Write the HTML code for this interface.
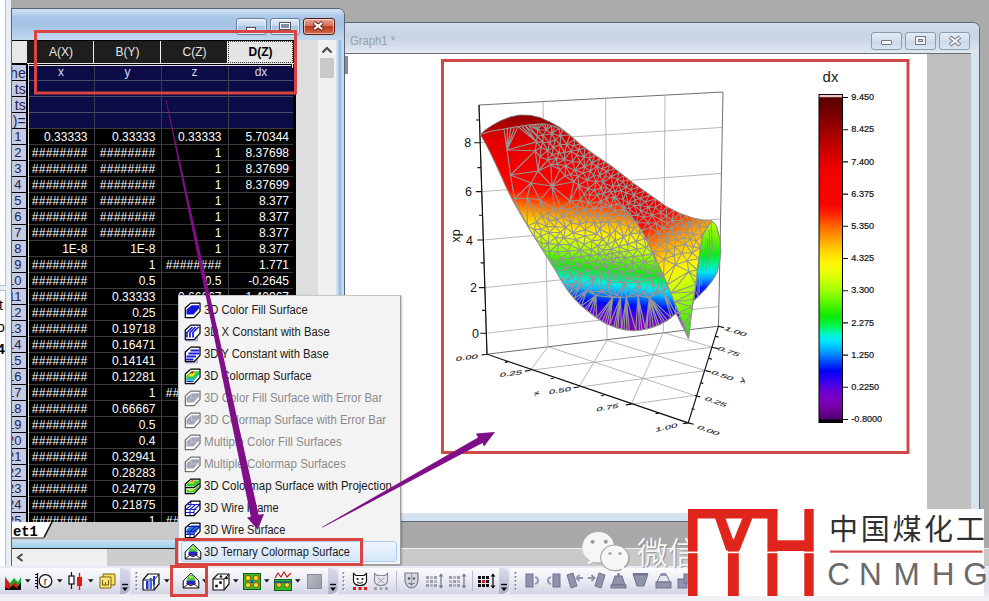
<!DOCTYPE html>
<html><head><meta charset="utf-8"><title>Origin 3D Ternary Colormap Surface</title>
<style>
html,body{margin:0;padding:0;}
body{width:989px;height:601px;overflow:hidden;background:#ababab;font-family:"Liberation Sans",sans-serif;}
#root{position:relative;width:989px;height:601px;overflow:hidden;background:#ababab;}
.a{position:absolute;}
.cell{position:absolute;height:16px;line-height:17px;font-size:12px;color:#fff;text-align:right;white-space:nowrap;overflow:hidden;}
.rh{position:absolute;left:11.5px;width:14.7px;height:15px;background:#c5cbe3;color:#1c2252;font-size:13px;line-height:16px;overflow:hidden;white-space:nowrap;display:flex;justify-content:flex-end;padding-right:4.7px;box-sizing:border-box;}
.rh.r{padding-right:0.5px;}
.mi{position:absolute;left:204px;font-size:11.5px;color:#1a1a1a;white-space:nowrap;line-height:14px;letter-spacing:0.1px;}
.mi.dis{color:#8a8a8a;}
.tk{font-family:"Liberation Sans",sans-serif;}
</style></head>
<body><div id="root">
<div class="a" style="left:0;top:0;width:6px;height:567px;background:#fff;border-right:1px solid #b8bcc4;border-bottom:1px solid #b8bcc4;box-sizing:border-box"></div>
<div class="a" style="left:6px;top:0;width:5px;height:567px;background:#e9edf4"></div>
<div class="a" style="left:0;top:285px;width:6px;height:1px;background:#b8bcc4"></div><div class="a" style="left:0;top:286px;width:6px;height:4px;background:#e9edf4"></div><div class="a" style="left:0;top:290px;width:6px;height:1px;background:#b8bcc4"></div>
<div class="a" style="left:0;top:294px;width:5px;height:60px;font-size:14px;line-height:22px;color:#000;overflow:hidden;white-space:nowrap"><div style="margin-left:-1px">t</div><div style="margin-left:-3px">p</div><div style="margin-left:-3px;font-weight:bold">4</div></div>
<div class="a" style="left:11px;top:8px;width:334px;height:560px;background:#b9d1ea;border:1px solid #5a6470;border-radius:0 7px 0 0;box-sizing:border-box"></div>
<div class="a" style="left:12px;top:9px;width:332px;height:31px;border-radius:0 6px 0 0;background:linear-gradient(#d2e2f4 0,#a8c5e7 28%,#a6c4e6 55%,#c4d8ef 100%)"></div>
<div class="a" style="left:336px;top:40px;width:8px;height:526px;background:linear-gradient(90deg,#d9e6f4 0,#b5d0ec 32%,#86b4e2 50%,#b5d0ec 66%,#cfdff1 100%)"></div>
<div class="a" style="left:12px;top:40px;width:324px;height:482px;background:#000"></div>
<div class="a" style="left:12px;top:41px;width:15px;height:22px;background:#e8e8e8"></div>
<div class="a" style="left:27px;top:41px;width:269px;height:22px;background:#1e1e1e"></div>
<div class="a" style="left:29px;top:41px;width:64px;height:22px;line-height:23px;text-align:center;font-size:12px;color:#e6e6e6">A(X)</div>
<div class="a" style="left:93px;top:41px;width:1px;height:22px;background:#f0f0f0"></div>
<div class="a" style="left:95px;top:41px;width:65px;height:22px;line-height:23px;text-align:center;font-size:12px;color:#e6e6e6">B(Y)</div>
<div class="a" style="left:160px;top:41px;width:1px;height:22px;background:#f0f0f0"></div>
<div class="a" style="left:162px;top:41px;width:65px;height:22px;line-height:23px;text-align:center;font-size:12px;color:#e6e6e6">C(Z)</div>
<div class="a" style="left:227px;top:41px;width:1px;height:22px;background:#f0f0f0"></div>
<div class="a" style="left:228px;top:41px;width:65px;height:22px;line-height:21px;text-align:center;font-size:12px;font-weight:bold;color:#000;background:#e4e4e4;border:1px dotted #333;box-sizing:border-box">D(Z)</div>
<div class="a" style="left:27px;top:63px;width:269px;height:1px;background:#e8e8e8"></div>
<div class="a" style="left:28px;top:65px;width:266px;height:63px;background:#0b0b45;border:1px solid #e0e0e0;border-bottom:none;box-sizing:border-box"></div>
<div class="a" style="left:29px;top:80px;width:264px;height:1px;background:#4a4a6a"></div>
<div class="a" style="left:29px;top:96px;width:264px;height:1px;background:#4a4a6a"></div>
<div class="a" style="left:29px;top:112px;width:264px;height:1px;background:#4a4a6a"></div>
<div class="a" style="left:94px;top:66px;width:1px;height:456px;background:#3c3c4c"></div>
<div class="a" style="left:161px;top:66px;width:1px;height:456px;background:#3c3c4c"></div>
<div class="a" style="left:228px;top:66px;width:1px;height:456px;background:#3c3c4c"></div>
<div class="cell" style="left:29px;top:65px;width:64px;text-align:center;color:#d8d8f0;line-height:15px">x</div>
<div class="cell" style="left:95px;top:65px;width:65px;text-align:center;color:#d8d8f0;line-height:15px">y</div>
<div class="cell" style="left:162px;top:65px;width:65px;text-align:center;color:#d8d8f0;line-height:15px">z</div>
<div class="cell" style="left:229px;top:65px;width:64px;text-align:center;color:#d8d8f0;line-height:15px">dx</div>
<div class="rh r" style="top:65px;font-size:14px;line-height:16px"><span>he</span></div>
<div class="rh r" style="top:81px;font-size:14px;line-height:16px"><span>ts</span></div>
<div class="rh r" style="top:97px;font-size:14px;line-height:16px"><span>ts</span></div>
<div class="rh r" style="top:113px;font-size:14px;line-height:16px"><span>)=</span></div>
<div class="a" style="left:29px;top:128px;width:264px;height:1px;background:#3a3a3a"></div>
<div class="rh" style="top:129px;height:15px"><span>1</span></div>
<div class="cell" style="left:29px;top:129px;width:58.5px">0.33333</div>
<div class="cell" style="left:95px;top:129px;width:60.5px">0.33333</div>
<div class="cell" style="left:162px;top:129px;width:59.5px">0.33333</div>
<div class="cell" style="left:229px;top:129px;width:60.0px">5.70344</div>
<div class="a" style="left:29px;top:144px;width:264px;height:1px;background:#3a3a3a"></div>
<div class="rh" style="top:145px;height:15px"><span>2</span></div>
<div class="cell" style="left:29px;top:145px;width:58.5px;letter-spacing:0.3px">########</div>
<div class="cell" style="left:95px;top:145px;width:60.5px;letter-spacing:0.3px">########</div>
<div class="cell" style="left:162px;top:145px;width:59.5px">1</div>
<div class="cell" style="left:229px;top:145px;width:60.0px">8.37698</div>
<div class="a" style="left:29px;top:160px;width:264px;height:1px;background:#3a3a3a"></div>
<div class="rh" style="top:161px;height:15px"><span>3</span></div>
<div class="cell" style="left:29px;top:161px;width:58.5px;letter-spacing:0.3px">########</div>
<div class="cell" style="left:95px;top:161px;width:60.5px;letter-spacing:0.3px">########</div>
<div class="cell" style="left:162px;top:161px;width:59.5px">1</div>
<div class="cell" style="left:229px;top:161px;width:60.0px">8.37699</div>
<div class="a" style="left:29px;top:176px;width:264px;height:1px;background:#3a3a3a"></div>
<div class="rh" style="top:177px;height:15px"><span>4</span></div>
<div class="cell" style="left:29px;top:177px;width:58.5px;letter-spacing:0.3px">########</div>
<div class="cell" style="left:95px;top:177px;width:60.5px;letter-spacing:0.3px">########</div>
<div class="cell" style="left:162px;top:177px;width:59.5px">1</div>
<div class="cell" style="left:229px;top:177px;width:60.0px">8.37699</div>
<div class="a" style="left:29px;top:192px;width:264px;height:1px;background:#3a3a3a"></div>
<div class="rh" style="top:193px;height:15px"><span>5</span></div>
<div class="cell" style="left:29px;top:193px;width:58.5px;letter-spacing:0.3px">########</div>
<div class="cell" style="left:95px;top:193px;width:60.5px;letter-spacing:0.3px">########</div>
<div class="cell" style="left:162px;top:193px;width:59.5px">1</div>
<div class="cell" style="left:229px;top:193px;width:60.0px">8.377</div>
<div class="a" style="left:29px;top:208px;width:264px;height:1px;background:#3a3a3a"></div>
<div class="rh" style="top:209px;height:15px"><span>6</span></div>
<div class="cell" style="left:29px;top:209px;width:58.5px;letter-spacing:0.3px">########</div>
<div class="cell" style="left:95px;top:209px;width:60.5px;letter-spacing:0.3px">########</div>
<div class="cell" style="left:162px;top:209px;width:59.5px">1</div>
<div class="cell" style="left:229px;top:209px;width:60.0px">8.377</div>
<div class="a" style="left:29px;top:224px;width:264px;height:1px;background:#3a3a3a"></div>
<div class="rh" style="top:225px;height:15px"><span>7</span></div>
<div class="cell" style="left:29px;top:225px;width:58.5px;letter-spacing:0.3px">########</div>
<div class="cell" style="left:95px;top:225px;width:60.5px;letter-spacing:0.3px">########</div>
<div class="cell" style="left:162px;top:225px;width:59.5px">1</div>
<div class="cell" style="left:229px;top:225px;width:60.0px">8.377</div>
<div class="a" style="left:29px;top:240px;width:264px;height:1px;background:#3a3a3a"></div>
<div class="rh" style="top:241px;height:15px"><span>8</span></div>
<div class="cell" style="left:29px;top:241px;width:58.5px">1E-8</div>
<div class="cell" style="left:95px;top:241px;width:60.5px">1E-8</div>
<div class="cell" style="left:162px;top:241px;width:59.5px">1</div>
<div class="cell" style="left:229px;top:241px;width:60.0px">8.377</div>
<div class="a" style="left:29px;top:256px;width:264px;height:1px;background:#3a3a3a"></div>
<div class="rh" style="top:257px;height:15px"><span>9</span></div>
<div class="cell" style="left:29px;top:257px;width:58.5px;letter-spacing:0.3px">########</div>
<div class="cell" style="left:95px;top:257px;width:60.5px">1</div>
<div class="cell" style="left:162px;top:257px;width:59.5px;letter-spacing:0.3px">########</div>
<div class="cell" style="left:229px;top:257px;width:60.0px">1.771</div>
<div class="a" style="left:29px;top:272px;width:264px;height:1px;background:#3a3a3a"></div>
<div class="rh" style="top:273px;height:15px"><span>10</span></div>
<div class="cell" style="left:29px;top:273px;width:58.5px;letter-spacing:0.3px">########</div>
<div class="cell" style="left:95px;top:273px;width:60.5px">0.5</div>
<div class="cell" style="left:162px;top:273px;width:59.5px">0.5</div>
<div class="cell" style="left:229px;top:273px;width:60.0px">-0.2645</div>
<div class="a" style="left:29px;top:288px;width:264px;height:1px;background:#3a3a3a"></div>
<div class="rh" style="top:289px;height:15px"><span>11</span></div>
<div class="cell" style="left:29px;top:289px;width:58.5px;letter-spacing:0.3px">########</div>
<div class="cell" style="left:95px;top:289px;width:60.5px">0.33333</div>
<div class="cell" style="left:162px;top:289px;width:59.5px">0.66667</div>
<div class="cell" style="left:229px;top:289px;width:60.0px">1.40967</div>
<div class="a" style="left:29px;top:304px;width:264px;height:1px;background:#3a3a3a"></div>
<div class="rh" style="top:305px;height:15px"><span>12</span></div>
<div class="cell" style="left:29px;top:305px;width:58.5px;letter-spacing:0.3px">########</div>
<div class="cell" style="left:95px;top:305px;width:60.5px">0.25</div>
<div class="cell" style="left:162px;top:305px;width:59.5px">0.75</div>
<div class="cell" style="left:229px;top:305px;width:60.0px">2.52465</div>
<div class="a" style="left:29px;top:320px;width:264px;height:1px;background:#3a3a3a"></div>
<div class="rh" style="top:321px;height:15px"><span>13</span></div>
<div class="cell" style="left:29px;top:321px;width:58.5px;letter-spacing:0.3px">########</div>
<div class="cell" style="left:95px;top:321px;width:60.5px">0.19718</div>
<div class="cell" style="left:162px;top:321px;width:59.5px">0.80282</div>
<div class="cell" style="left:229px;top:321px;width:60.0px">3.36141</div>
<div class="a" style="left:29px;top:336px;width:264px;height:1px;background:#3a3a3a"></div>
<div class="rh" style="top:337px;height:15px"><span>14</span></div>
<div class="cell" style="left:29px;top:337px;width:58.5px;letter-spacing:0.3px">########</div>
<div class="cell" style="left:95px;top:337px;width:60.5px">0.16471</div>
<div class="cell" style="left:162px;top:337px;width:59.5px">0.83529</div>
<div class="cell" style="left:229px;top:337px;width:60.0px">3.97645</div>
<div class="a" style="left:29px;top:352px;width:264px;height:1px;background:#3a3a3a"></div>
<div class="rh" style="top:353px;height:15px"><span>15</span></div>
<div class="cell" style="left:29px;top:353px;width:58.5px;letter-spacing:0.3px">########</div>
<div class="cell" style="left:95px;top:353px;width:60.5px">0.14141</div>
<div class="cell" style="left:162px;top:353px;width:59.5px">0.85859</div>
<div class="cell" style="left:229px;top:353px;width:60.0px">4.44372</div>
<div class="a" style="left:29px;top:368px;width:264px;height:1px;background:#3a3a3a"></div>
<div class="rh" style="top:369px;height:15px"><span>16</span></div>
<div class="cell" style="left:29px;top:369px;width:58.5px;letter-spacing:0.3px">########</div>
<div class="cell" style="left:95px;top:369px;width:60.5px">0.12281</div>
<div class="cell" style="left:162px;top:369px;width:59.5px">0.87719</div>
<div class="cell" style="left:229px;top:369px;width:60.0px">4.82874</div>
<div class="a" style="left:29px;top:384px;width:264px;height:1px;background:#3a3a3a"></div>
<div class="rh" style="top:385px;height:15px"><span>17</span></div>
<div class="cell" style="left:29px;top:385px;width:58.5px;letter-spacing:0.3px">########</div>
<div class="cell" style="left:95px;top:385px;width:60.5px">1</div>
<div class="cell" style="left:162px;top:385px;width:59.5px;letter-spacing:0.3px">########</div>
<div class="cell" style="left:229px;top:385px;width:60.0px">1.771</div>
<div class="a" style="left:29px;top:400px;width:264px;height:1px;background:#3a3a3a"></div>
<div class="rh" style="top:401px;height:15px"><span>18</span></div>
<div class="cell" style="left:29px;top:401px;width:58.5px;letter-spacing:0.3px">########</div>
<div class="cell" style="left:95px;top:401px;width:60.5px">0.66667</div>
<div class="cell" style="left:162px;top:401px;width:59.5px">0.33333</div>
<div class="cell" style="left:229px;top:401px;width:60.0px">-0.6331</div>
<div class="a" style="left:29px;top:416px;width:264px;height:1px;background:#3a3a3a"></div>
<div class="rh" style="top:417px;height:15px"><span>19</span></div>
<div class="cell" style="left:29px;top:417px;width:58.5px;letter-spacing:0.3px">########</div>
<div class="cell" style="left:95px;top:417px;width:60.5px">0.5</div>
<div class="cell" style="left:162px;top:417px;width:59.5px">0.5</div>
<div class="cell" style="left:229px;top:417px;width:60.0px">-0.2645</div>
<div class="a" style="left:29px;top:432px;width:264px;height:1px;background:#3a3a3a"></div>
<div class="rh" style="top:433px;height:15px"><span>20</span></div>
<div class="cell" style="left:29px;top:433px;width:58.5px;letter-spacing:0.3px">########</div>
<div class="cell" style="left:95px;top:433px;width:60.5px">0.4</div>
<div class="cell" style="left:162px;top:433px;width:59.5px">0.6</div>
<div class="cell" style="left:229px;top:433px;width:60.0px">0.4133</div>
<div class="a" style="left:29px;top:448px;width:264px;height:1px;background:#3a3a3a"></div>
<div class="rh" style="top:449px;height:15px"><span>21</span></div>
<div class="cell" style="left:29px;top:449px;width:58.5px;letter-spacing:0.3px">########</div>
<div class="cell" style="left:95px;top:449px;width:60.5px">0.32941</div>
<div class="cell" style="left:162px;top:449px;width:59.5px">0.67059</div>
<div class="cell" style="left:229px;top:449px;width:60.0px">0.9684</div>
<div class="a" style="left:29px;top:464px;width:264px;height:1px;background:#3a3a3a"></div>
<div class="rh" style="top:465px;height:15px"><span>22</span></div>
<div class="cell" style="left:29px;top:465px;width:58.5px;letter-spacing:0.3px">########</div>
<div class="cell" style="left:95px;top:465px;width:60.5px">0.28283</div>
<div class="cell" style="left:162px;top:465px;width:59.5px">0.71717</div>
<div class="cell" style="left:229px;top:465px;width:60.0px">1.4227</div>
<div class="a" style="left:29px;top:480px;width:264px;height:1px;background:#3a3a3a"></div>
<div class="rh" style="top:481px;height:15px"><span>23</span></div>
<div class="cell" style="left:29px;top:481px;width:58.5px;letter-spacing:0.3px">########</div>
<div class="cell" style="left:95px;top:481px;width:60.5px">0.24779</div>
<div class="cell" style="left:162px;top:481px;width:59.5px">0.75221</div>
<div class="cell" style="left:229px;top:481px;width:60.0px">1.7968</div>
<div class="a" style="left:29px;top:496px;width:264px;height:1px;background:#3a3a3a"></div>
<div class="rh" style="top:497px;height:15px"><span>24</span></div>
<div class="cell" style="left:29px;top:497px;width:58.5px;letter-spacing:0.3px">########</div>
<div class="cell" style="left:95px;top:497px;width:60.5px">0.21875</div>
<div class="cell" style="left:162px;top:497px;width:59.5px">0.78125</div>
<div class="cell" style="left:229px;top:497px;width:60.0px">2.1253</div>
<div class="a" style="left:29px;top:512px;width:264px;height:1px;background:#3a3a3a"></div>
<div class="rh" style="top:513px;height:10px"><span>25</span></div>
<div class="cell" style="left:29px;top:513px;width:58.5px;letter-spacing:0.3px">########</div>
<div class="cell" style="left:95px;top:513px;width:60.5px">1</div>
<div class="cell" style="left:162px;top:513px;width:59.5px;letter-spacing:0.3px">########</div>
<div class="cell" style="left:229px;top:513px;width:60.0px">1.771</div>
<div class="a" style="left:28px;top:64px;width:1px;height:458px;background:#d8d8d8"></div>
<div class="a" style="left:291px;top:64px;width:3px;height:4px;background:#fff;border:1px solid #000;border-top:none"></div>
<div class="a" style="left:12px;top:522px;width:324px;height:18px;background:#c9c9c9"></div>
<svg class="a" style="left:12px;top:522px" width="60" height="19" viewBox="0 0 60 19"><path d="M0 0H40L32 15.500H0Z" fill="#fff"/><path d="M40 0L32 15.500" stroke="#111" stroke-width="1.600" fill="none"/><path d="M0 16H32" stroke="#555" stroke-width="1"/></svg>
<div class="a" style="left:13px;top:524.5px;font-family:'Liberation Mono',monospace;font-weight:bold;font-size:13.8px;line-height:15px;color:#000;letter-spacing:0">et1</div>
<div class="a" style="left:12px;top:540px;width:324px;height:8px;background:linear-gradient(#c6e2f1,#a2d0e8)"></div>
<div class="a" style="left:12px;top:548px;width:324px;height:1px;background:#222"></div>
<div class="a" style="left:12px;top:549px;width:324px;height:17px;background:#f0f0f0"></div>
<div class="a" style="left:107px;top:549px;width:229px;height:17px;background:#cdcdcd"></div>
<svg class="a" style="left:15px;top:552px" width="12" height="11" viewBox="0 0 12 11"><path d="M7.500 2L3 5.500L7.500 9" stroke="#505050" stroke-width="2.200" fill="none"/></svg>
<div class="a" style="left:296px;top:40px;width:22px;height:482px;background:#dedede"></div>
<div class="a" style="left:293px;top:64px;width:3px;height:458px;background:#000"></div>
<div class="a" style="left:318px;top:40px;width:18px;height:482px;background:#f0f0f0"></div>
<div class="a" style="left:320px;top:58px;width:14px;height:20px;background:#c9c9c9"></div>
<svg class="a" style="left:320px;top:44px" width="14" height="12" viewBox="0 0 14 12"><path d="M2.5 8.5L7 4L11.5 8.5" stroke="#444" stroke-width="2" fill="none"/></svg>
<div class="a" style="left:235.5px;top:18px;width:31px;height:17px;background:linear-gradient(#e4eefa 0,#c4d7ee 45%,#a9c3e2 50%,#c2d6ee 100%);border:1px solid #6a7f99;border-radius:3px;box-sizing:border-box;box-shadow:inset 0 0 0 1px rgba(255,255,255,.55)"></div>
<div class="a" style="left:269.5px;top:18px;width:30.5px;height:17px;background:linear-gradient(#e4eefa 0,#c4d7ee 45%,#a9c3e2 50%,#c2d6ee 100%);border:1px solid #6a7f99;border-radius:3px;box-sizing:border-box;box-shadow:inset 0 0 0 1px rgba(255,255,255,.55)"></div>
<div class="a" style="left:303.2px;top:18px;width:31.8px;height:17px;background:linear-gradient(#e9a99b 0,#d5705b 45%,#c1391f 50%,#cf6a4a 100%);border:1px solid #5a1a10;border-radius:3px;box-sizing:border-box;box-shadow:inset 0 0 0 1px rgba(255,255,255,.55)"></div>
<div class="a" style="left:246px;top:27px;width:10px;height:4px;background:#fff;border:1px solid #555;box-sizing:border-box"></div>
<div class="a" style="left:280px;top:23px;width:9.5px;height:6px;border:1.6px solid #fff;outline:1px solid #555;box-sizing:border-box;background:#7d8fa8"></div>
<svg class="a" style="left:312.3px;top:21.3px" width="12.4" height="10" viewBox="0 0 14 11"><path d="M2 1.5L12 9.5M12 1.5L2 9.5" stroke="#4a1a10" stroke-width="4.2"/><path d="M2.5 2L11.5 9M11.5 2L2.5 9" stroke="#fff" stroke-width="2.4"/></svg>
<div class="a" style="left:345px;top:22px;width:635px;height:500px;background:#d6e3f1;border:1px solid #5f6670;border-left:none;border-radius:0 7px 0 0;box-sizing:border-box"></div>
<div class="a" style="left:345px;top:23px;width:634px;height:30px;border-radius:0 6px 0 0;background:linear-gradient(#d6e0ec 0,#c6d3e3 40%,#ccd8e6 60%,#e1e9f2 100%)"></div>
<div class="a" style="left:345px;top:53px;width:626px;height:1px;background:#6a6f76"></div>
<div class="a" style="left:345px;top:54px;width:582px;height:459px;background:#fff"></div>
<div class="a" style="left:927px;top:54px;width:44px;height:459px;background:#c0c0c0"></div>
<div class="a" style="left:345px;top:56px;width:3px;height:18px;background:#8a8a8a"></div>
<div class="a" style="left:350px;top:34px;font-size:12px;line-height:15px;color:#98a0aa;transform:scaleX(0.94);transform-origin:0 0">Graph1 *</div>
<div class="a" style="left:871px;top:32px;width:31px;height:18px;background:linear-gradient(#e3ebf5,#d3dfee 50%,#cad8ea 52%,#d9e4f1);border:1px solid #8b9bb0;border-radius:3px;box-sizing:border-box"></div>
<div class="a" style="left:905px;top:32px;width:31px;height:18px;background:linear-gradient(#e3ebf5,#d3dfee 50%,#cad8ea 52%,#d9e4f1);border:1px solid #8b9bb0;border-radius:3px;box-sizing:border-box"></div>
<div class="a" style="left:939px;top:32px;width:31px;height:18px;background:linear-gradient(#e3ebf5,#d3dfee 50%,#cad8ea 52%,#d9e4f1);border:1px solid #8b9bb0;border-radius:3px;box-sizing:border-box"></div>
<div class="a" style="left:881px;top:40px;width:11px;height:5px;background:#f4f6f9;border:1px solid #707884;border-radius:1px;box-sizing:border-box"></div>
<div class="a" style="left:915px;top:36px;width:11px;height:9px;background:#f4f6f9;border:1px solid #707884;box-sizing:border-box"></div><div class="a" style="left:918px;top:39px;width:5px;height:3px;border:1px solid #707884;box-sizing:border-box;background:#cfd9e6"></div>
<svg class="a" style="left:948px;top:35px" width="14" height="12" viewBox="0 0 14 12"><path d="M2 2L12 10M12 2L2 10" stroke="#707884" stroke-width="4"/><path d="M2.5 2.5L11.5 9.5M11.5 2.5L2.5 9.5" stroke="#f4f6f9" stroke-width="2"/></svg>
<div class="a" style="left:345px;top:522px;width:644px;height:27px;background:#a9a9a9"></div>
<div class="a" style="left:336px;top:548px;width:653px;height:1px;background:#f2f2f2"></div>
<div class="a" style="left:336px;top:549px;width:653px;height:17px;background:#c9c9c9"></div>
<div class="a" style="left:0;top:566px;width:989px;height:31px;background:linear-gradient(#f4f5fa 0,#e4e6f0 50%,#c9ccdd 100%)"></div>
<div class="a" style="left:0;top:597px;width:989px;height:4px;background:#f0f0f4"></div>
<svg class="a" style="left:0;top:0" width="989" height="601" viewBox="0 0 989 601" font-family="'Liberation Sans',sans-serif">
<defs>
<linearGradient id="cb" gradientUnits="userSpaceOnUse" x1="0" y1="97" x2="0.0" y2="419.0"><stop offset="0.0000" stop-color="#560000"/><stop offset="0.0559" stop-color="#7c0000"/><stop offset="0.1180" stop-color="#a80000"/><stop offset="0.1801" stop-color="#d60000"/><stop offset="0.2329" stop-color="#f80000"/><stop offset="0.3354" stop-color="#ff0000"/><stop offset="0.3665" stop-color="#ff2a00"/><stop offset="0.4006" stop-color="#ff6400"/><stop offset="0.4441" stop-color="#ffa200"/><stop offset="0.4814" stop-color="#ffd800"/><stop offset="0.5124" stop-color="#fff600"/><stop offset="0.5497" stop-color="#e4ff00"/><stop offset="0.5994" stop-color="#a4ff00"/><stop offset="0.6460" stop-color="#4cf400"/><stop offset="0.6801" stop-color="#0ce800"/><stop offset="0.7112" stop-color="#00f650"/><stop offset="0.7360" stop-color="#00f8c8"/><stop offset="0.7578" stop-color="#00e8ff"/><stop offset="0.7919" stop-color="#009cff"/><stop offset="0.8261" stop-color="#0040ff"/><stop offset="0.8509" stop-color="#0000ff"/><stop offset="0.8789" stop-color="#3000f0"/><stop offset="0.9099" stop-color="#6400d8"/><stop offset="0.9410" stop-color="#8000c0"/><stop offset="0.9720" stop-color="#70009c"/><stop offset="1.0000" stop-color="#500070"/></linearGradient>
<linearGradient id="gb2" gradientUnits="userSpaceOnUse" x1="582" y1="114" x2="560.4" y2="329.8"><stop offset="0.0000" stop-color="#7a0000"/><stop offset="0.0459" stop-color="#a80000"/><stop offset="0.0826" stop-color="#c80000"/><stop offset="0.1651" stop-color="#e20000"/><stop offset="0.2798" stop-color="#f40000"/><stop offset="0.3761" stop-color="#ff0a00"/><stop offset="0.4220" stop-color="#ff4a00"/><stop offset="0.4587" stop-color="#ff8800"/><stop offset="0.5046" stop-color="#ffc800"/><stop offset="0.5413" stop-color="#fff000"/><stop offset="0.5780" stop-color="#e0ff00"/><stop offset="0.6239" stop-color="#a0ff00"/><stop offset="0.6697" stop-color="#48f000"/><stop offset="0.7064" stop-color="#10e810"/><stop offset="0.7385" stop-color="#00f080"/><stop offset="0.7661" stop-color="#00f0e8"/><stop offset="0.7936" stop-color="#00c0ff"/><stop offset="0.8303" stop-color="#0050ff"/><stop offset="0.8578" stop-color="#0008ff"/><stop offset="0.8899" stop-color="#4000e8"/><stop offset="0.9266" stop-color="#7800cc"/><stop offset="0.9725" stop-color="#8800b0"/><stop offset="1.0000" stop-color="#700090"/></linearGradient>
<linearGradient id="gf2" gradientUnits="userSpaceOnUse" x1="643.825" y1="182.65" x2="714.9" y2="324.8"><stop offset="0.0000" stop-color="#e80000"/><stop offset="0.1572" stop-color="#f00000"/><stop offset="0.2516" stop-color="#ff1000"/><stop offset="0.3270" stop-color="#ff5800"/><stop offset="0.3962" stop-color="#ff9800"/><stop offset="0.4843" stop-color="#ffd000"/><stop offset="0.5723" stop-color="#fff400"/><stop offset="0.6604" stop-color="#d8ff00"/><stop offset="0.7673" stop-color="#98ff00"/><stop offset="0.8805" stop-color="#50f000"/><stop offset="1.0000" stop-color="#18e800"/></linearGradient>
<linearGradient id="gr2" gradientUnits="userSpaceOnUse" x1="0" y1="224" x2="0.0" y2="297.0"><stop offset="0.0000" stop-color="#b0ff00"/><stop offset="0.2192" stop-color="#60f000"/><stop offset="0.4247" stop-color="#10e820"/><stop offset="0.5616" stop-color="#00f0a0"/><stop offset="0.6575" stop-color="#00e8f0"/><stop offset="0.7671" stop-color="#0090ff"/><stop offset="0.8767" stop-color="#0020ff"/><stop offset="1.0000" stop-color="#2000e0"/></linearGradient>
</defs>
<rect x="442.5" y="60.5" width="465.5" height="392" fill="none" stroke="#cf4a46" stroke-width="3"/>
<polygon points="487,354.2 718.5,326.2 723,92 479,105" fill="#fff" stroke="#4a4a4a" stroke-width="0.8"/>
<path d="M548.0 346.7L543.0 101.6M607.0 340.3L605.7 98.3M663.3 332.7L665.0 95.1M486.3 333.2L718.9 306.5M484.9 287.6L719.7 263.6M483.3 240.0L720.6 218.9M481.8 191.6L721.4 173.4M480.2 142.7L722.3 127.4M530.4 370.3L548.0 346.7M530.4 370.3L712.4 347.2M548.0 346.7L694.7 395.5M579.0 387.0L607.0 340.3M579.0 387.0L705.5 370.6M607.0 340.3L705.5 370.6M631.3 404.1L663.3 332.7M631.3 404.1L694.7 395.5M663.3 332.7L712.4 347.2" fill="none" stroke="#a4a4a4" stroke-width="0.8"/>
<path d="M479 105L487 354.2L688.2 422.9L718.5 326.2M486.3 333.2h-6M484.9 287.6h-6M483.3 240.0h-6M481.8 191.6h-6M480.2 142.7h-6M485.6 310.4h-3.5M484.1 262.8h-3.5M482.5 215.2h-3.5M481.0 167.6h-3.5M479.5 120.0h-3.5M487.0 354.2l-5.5 0.8M688.2 422.9l5.5 1.4M530.4 370.3l-5.5 0.8M694.7 395.5l5.5 1.4M579.0 387.0l-5.5 0.8M705.5 370.6l5.5 1.4M631.3 404.1l-5.5 0.8M712.4 347.2l5.5 1.4M688.2 422.9l-5.5 0.8M718.5 326.2l5.5 1.4M507.8 361.9l-3 0.5M691.6 408.7l3 .8M553.7 378.3l-3 0.5M700.3 382.6l3 .8M604.1 395.2l-3 0.5M709.1 358.4l3 .8M658.6 413.1l-3 0.5M715.6 336.3l3 .8" fill="none" stroke="#111" stroke-width="1.15"/>
<text x="475.6" y="337.7" font-size="12.5" text-anchor="middle" fill="#111">0</text>
<text x="473.4" y="292.1" font-size="12.5" text-anchor="middle" fill="#111">2</text>
<text x="469.5" y="244.5" font-size="12.5" text-anchor="middle" fill="#111">4</text>
<text x="468.6" y="196.1" font-size="12.5" text-anchor="middle" fill="#111">6</text>
<text x="467.7" y="147.2" font-size="12.5" text-anchor="middle" fill="#111">8</text>
<text transform="translate(459.5,236) rotate(-90)" font-size="12.5" text-anchor="middle" fill="#111">xp</text>
<text transform="translate(467,357.5) rotate(-7) skewX(-18) scale(1,0.5)" font-size="11.5" text-anchor="middle" fill="#222" stroke="#222" stroke-width="0.2" y="4">0.00</text>
<text transform="translate(511,373.5) rotate(-8) skewX(-18) scale(1,0.5)" font-size="11.5" text-anchor="middle" fill="#222" stroke="#222" stroke-width="0.2" y="4">0.25</text>
<text transform="translate(560,390.5) rotate(-9) skewX(-18) scale(1,0.5)" font-size="11.5" text-anchor="middle" fill="#222" stroke="#222" stroke-width="0.2" y="4">0.50</text>
<text transform="translate(607.5,407.6) rotate(-11) skewX(-18) scale(1,0.5)" font-size="11.5" text-anchor="middle" fill="#222" stroke="#222" stroke-width="0.2" y="4">0.75</text>
<text transform="translate(666.5,427.5) rotate(-12) skewX(-18) scale(1,0.5)" font-size="11.5" text-anchor="middle" fill="#222" stroke="#222" stroke-width="0.2" y="4">1.00</text>
<text transform="translate(536.5,393) rotate(-25) skewX(-18) scale(1,0.5)" font-size="11.5" text-anchor="middle" fill="#222" stroke="#222" stroke-width="0.2" y="4">x</text>
<text transform="translate(708.5,430.4) rotate(19) skewX(-30) scale(1,0.5)" font-size="11.5" text-anchor="middle" fill="#222" stroke="#222" stroke-width="0.2" y="4">0.00</text>
<text transform="translate(716,401.8) rotate(19) skewX(-30) scale(1,0.5)" font-size="11.5" text-anchor="middle" fill="#222" stroke="#222" stroke-width="0.2" y="4">0.25</text>
<text transform="translate(722.6,375.5) rotate(19) skewX(-30) scale(1,0.5)" font-size="11.5" text-anchor="middle" fill="#222" stroke="#222" stroke-width="0.2" y="4">0.50</text>
<text transform="translate(728.8,351.5) rotate(19) skewX(-30) scale(1,0.5)" font-size="11.5" text-anchor="middle" fill="#222" stroke="#222" stroke-width="0.2" y="4">0.75</text>
<text transform="translate(735.8,331.5) rotate(19) skewX(-30) scale(1,0.5)" font-size="11.5" text-anchor="middle" fill="#222" stroke="#222" stroke-width="0.2" y="4">1.00</text>
<text transform="translate(742,380) rotate(-70) skewX(0) scale(1,0.5)" font-size="11.5" text-anchor="middle" fill="#222" stroke="#222" stroke-width="0.2" y="4">y</text>
<clipPath id="cpb"><polygon points="480.3,134.3 486,129.5 492,125.5 500,121 510,117 520,115 530,115.3 540,117.5 550,122 560,127.5 570,135 580,144 595,155 610,165 633,183 650,195 667,207 680,213.5 693,218 703,220 711.5,220.5 716.5,226 720,240 720.8,251 719.5,262 717,272.5 712,281 706,288.5 698,296.5 693,302 690.5,318 688.5,338.5 676,313.6 667.5,320.5 659,325 650.3,328.2 642,330 633,330.8 624,329.8 616,327.7 607,324.2 598.7,319.6 590,313 581.5,305.9 574,298.5 567.5,290.4 561.5,281 556,271.5 549.5,261 542.5,250 535,238.5 527.5,226 519.8,213 512.5,200 506,187 499.3,172 492.3,157 486.3,145"/></clipPath>
<polygon points="480.3,134.3 486,129.5 492,125.5 500,121 510,117 520,115 530,115.3 540,117.5 550,122 560,127.5 570,135 580,144 595,155 610,165 633,183 650,195 667,207 680,213.5 693,218 703,220 711.5,220.5 716.5,226 720,240 720.8,251 719.5,262 717,272.5 712,281 706,288.5 698,296.5 693,302 690.5,318 688.5,338.5 676,313.6 667.5,320.5 659,325 650.3,328.2 642,330 633,330.8 624,329.8 616,327.7 607,324.2 598.7,319.6 590,313 581.5,305.9 574,298.5 567.5,290.4 561.5,281 556,271.5 549.5,261 542.5,250 535,238.5 527.5,226 519.8,213 512.5,200 506,187 499.3,172 492.3,157 486.3,145" fill="url(#gb2)" stroke="#8a8a8a" stroke-width="1"/>
<polygon points="480.3,134.3 486,129.5 492,125.5 500,121 510,117 520,115 530,115.3 540,117.5 550,122 560,127.5 562.5,130 555,126.5 545,124 532,124.5 518,126.5 504,129 492,131 480.3,134.3" fill="#7a0000" fill-opacity="0.35"/>
<g clip-path="url(#cpb)"><path d="M594.3 223.1L590.1 214.5M621.9 203.0L629.3 203.4M666.9 238.6L662.6 231.0M617.9 328.2L616.0 327.7M720.8 251.0L715.5 244.0M643.9 262.0L653.8 267.1M540.7 229.3L549.3 232.8M693.0 218.0L686.9 222.3M603.8 259.8L599.5 254.5M663.0 252.7L666.9 246.6M610.0 165.0L614.6 168.6M546.7 226.4L541.9 216.0M687.1 335.7L685.7 332.9M566.7 144.2L560.5 135.6M671.3 218.2L668.3 225.2M608.2 291.0L608.9 281.7M585.1 235.8L575.9 239.5M507.5 128.4L511.0 127.8M663.3 291.3L673.9 283.1M580.8 285.0L586.7 290.6M648.6 229.6L654.0 222.0M549.6 142.8L551.6 133.8M700.2 224.9L708.7 225.1M612.0 253.1L620.2 252.2M638.7 187.0L639.9 196.4M685.7 332.9L683.7 328.9M571.0 151.0L573.7 145.6M602.1 321.5L598.7 319.6M601.3 207.9L605.6 204.4M581.2 256.4L571.3 258.1M586.7 290.6L591.0 291.0M551.6 133.8L555.4 139.6M597.0 166.0L599.7 175.5M626.6 266.3L632.1 271.1M661.3 203.0L659.1 210.6M570.9 222.9L562.5 216.1M638.7 187.0L644.3 191.0M715.2 253.1L710.9 248.1M665.6 267.7L660.4 274.1M574.0 298.5L586.7 290.6M543.0 135.3L549.6 142.8M590.7 255.4L581.2 256.4M598.7 319.6L596.5 317.9M548.7 220.1L548.1 212.9M623.8 237.0L630.4 233.6M528.5 125.0L532.0 124.5M632.4 293.9L638.9 282.1M596.5 317.9L612.9 297.4M698.6 268.3L704.5 261.0M560.0 169.6L550.8 164.9M662.6 323.1L649.3 297.6M591.3 249.7L597.4 245.7M616.6 267.5L621.0 272.5M612.8 262.8L605.3 265.6M644.3 191.0L650.0 195.0M616.4 203.9L613.2 197.2M660.4 274.1L651.2 279.0M676.0 313.6L673.2 315.9M591.3 249.7L580.1 250.0M673.3 256.3L673.1 263.3M551.7 125.7L551.6 133.8M612.8 262.8L608.5 271.4M532.0 124.5L535.2 124.4M636.1 241.4L644.2 238.8M704.5 261.0L698.9 253.5M693.9 256.2L694.3 262.0M552.1 154.7L556.7 158.1M654.6 206.5L648.7 209.7M538.0 171.0L552.0 186.0M603.8 259.8L595.8 261.2M653.8 267.1L648.1 272.5M652.7 253.9L661.1 246.6M572.8 233.0L579.7 224.4M548.7 220.1L546.7 226.4M541.0 147.5L543.0 142.3M581.5 305.9L578.9 303.3M673.2 315.9L671.1 317.6M678.0 268.2L671.8 271.9M603.0 239.5L599.6 229.0M565.5 165.8L570.3 174.5M620.5 297.5L626.3 297.0M621.5 187.2L616.2 180.7M673.5 210.2L671.3 218.2M634.2 199.5L643.2 204.2M679.1 235.4L676.4 228.5M669.3 281.9L660.4 274.1M548.1 212.9L541.9 216.0M578.9 303.3L576.3 300.8M555.0 126.5L551.6 133.8M549.3 232.8L555.0 226.6M629.2 330.4L626.3 297.0M606.8 255.1L602.6 250.1M626.6 266.3L616.6 267.5M683.1 248.7L680.4 243.9M686.5 215.8L693.0 218.0M563.6 237.9L555.4 237.8M661.3 203.0L654.6 206.5M624.2 216.6L624.5 208.7M611.1 206.6L601.3 207.9M551.7 125.7L546.3 130.0M540.0 200.0L554.4 209.3M627.0 277.9L638.9 282.1M555.0 126.5L558.8 128.2M624.5 208.7L629.4 214.1M659.1 210.6L654.6 206.5M620.2 252.2L611.2 249.2M643.2 204.2L639.9 196.4M679.1 259.2L678.9 253.1M685.5 255.4L678.9 253.1M585.0 147.7L579.2 149.6M577.9 264.8L571.3 258.1M563.6 237.9L565.6 227.5M649.1 203.2L643.2 204.2M571.0 151.0L566.7 144.2M653.3 327.1L650.3 328.2M531.0 183.0L552.0 186.0M549.6 142.8L543.0 142.3M542.5 250.0L548.1 243.6M691.4 232.5L685.5 233.4M657.9 291.4L663.3 291.3M673.3 256.3L669.3 252.4M626.9 330.1L626.3 297.0M507.0 150.0L535.2 150.8M535.2 150.8L541.0 147.5M585.0 147.7L584.0 157.0M601.4 187.8L602.7 180.7M571.3 258.1L568.6 251.3M607.4 244.5L615.5 240.6M604.6 215.2L601.6 222.4M541.0 147.5L547.7 150.6M604.6 215.2L614.5 211.1M662.6 231.0L668.3 225.2M590.0 313.0L581.5 305.9M597.1 217.1L594.3 223.1M559.0 153.0L564.8 152.6M535.2 150.8L539.9 156.7M569.1 216.1L562.5 216.1M665.6 267.7L671.8 271.9M602.6 250.1L607.4 244.5M549.3 232.8L548.1 243.6M632.7 262.3L643.9 262.0M720.8 251.0L715.2 253.1M584.9 308.7L596.0 295.5M612.0 253.1L606.8 255.1M558.4 244.3L548.1 243.6M624.2 196.0L621.9 203.0M618.7 246.4L627.4 244.1M548.1 243.6L541.1 235.9M599.7 175.5L596.3 181.7M510.5 175.0L538.0 171.0M611.2 249.2L618.7 246.4M570.0 135.0L562.5 130.0M671.5 231.3L674.2 223.4M574.0 298.5L580.8 285.0M612.8 190.2L606.3 198.2M590.7 255.4L587.0 262.7M623.8 237.0L615.1 230.3M558.4 244.3L563.6 237.9M638.7 187.0L634.2 192.9M643.2 293.9L651.2 279.0M691.8 310.0L676.0 313.6M641.3 210.7L648.7 209.7M577.9 264.8L568.7 266.7M666.9 246.6L666.9 238.6M636.1 241.4L630.4 233.6M561.4 208.6L569.4 209.5M579.2 149.6L576.7 155.0M594.8 208.1L597.1 217.1M655.4 260.7L665.6 267.7M674.4 247.0L678.9 253.1M693.3 226.2L686.9 222.3M680.0 213.5L686.5 215.8M607.4 244.5L610.3 234.5M584.0 194.3L588.4 203.7M638.9 276.2L651.2 279.0M584.0 194.3L578.7 185.1M653.3 327.1L649.3 297.6M551.7 125.7L555.0 126.5M642.0 330.0L638.0 295.8M521.5 126.0L536.5 141.9M612.0 258.9L603.8 259.8M676.0 313.6L673.9 283.1M549.3 232.8L560.4 232.2M588.1 188.7L594.2 190.4M605.0 161.7L597.0 166.0M587.9 270.6L577.9 264.8M656.8 325.8L653.3 327.1M618.7 246.4L623.8 237.0M654.2 292.9L657.9 291.4M596.6 267.9L593.6 278.4M606.8 255.1L599.5 254.5M548.0 160.0L550.8 164.9M605.0 161.7L601.7 169.1M682.0 227.2L687.6 227.8M587.0 262.7L587.9 270.6M624.2 216.6L619.1 214.6M646.1 247.2L650.4 242.2M700.2 224.9L698.0 229.9M570.0 135.0L560.5 135.6M566.0 288.1L564.0 285.0M619.5 223.3L613.0 217.0M639.5 330.2L638.0 295.8M595.8 261.2L596.6 267.9M571.0 151.0L564.5 159.4M632.1 271.1L621.0 272.5M678.0 268.2L685.9 270.1M720.0 240.0L720.8 251.0M650.0 195.0L649.1 203.2M599.6 229.0L594.3 223.1M586.7 290.6L593.6 278.4M538.0 171.0L539.9 156.7M531.0 183.0L540.0 200.0M552.0 186.0L561.4 208.6M601.7 291.8L612.9 297.4M528.5 125.0L537.6 129.9M566.7 144.2L560.3 144.6M557.2 220.0L562.5 216.1M535.2 150.8L536.5 141.9M597.1 217.1L601.3 207.9M527.0 198.0L541.9 216.0M700.2 224.9L693.3 226.2M594.8 208.1L601.3 207.9M636.2 205.9L629.3 203.4M715.2 253.1L715.5 244.0M720.8 251.0L719.5 262.0M607.4 244.5L603.0 239.5M654.2 230.3L654.0 222.0M635.8 330.6L633.0 330.8M647.3 217.2L640.9 216.1M549.5 261.0L557.5 251.6M574.8 170.4L583.4 172.9M609.4 325.1L612.9 297.4M608.0 221.2L601.6 222.4M612.0 258.9L606.8 255.1M704.5 261.0L707.7 266.6M602.6 250.1L597.4 245.7M587.4 180.3L583.4 172.9M560.3 144.6L555.4 139.6M588.1 188.7L587.4 180.3M557.5 251.6L558.4 244.3M710.9 248.1L715.5 244.0M580.0 144.0L585.0 147.7M599.7 175.5L593.5 175.8M633.0 330.8L629.2 330.4M695.0 244.5L689.3 251.3M605.3 265.6L600.2 275.0M556.0 271.5L549.5 261.0M608.0 221.2L619.5 223.3M678.0 268.2L673.1 263.3M578.0 176.0L574.8 170.4M566.0 268.9L568.7 266.7M705.6 251.8L710.9 248.1M604.6 215.2L611.1 206.6M510.5 175.0L531.0 183.0M585.0 147.7L590.0 151.3M565.0 176.0L560.0 169.6M548.0 160.0L556.7 158.1M620.5 297.5L624.4 283.0M693.0 302.0L691.8 310.0M637.0 249.3L646.1 247.2M602.7 180.7L596.3 181.7M602.7 180.7L607.6 187.6M549.5 261.0L542.5 250.0M638.0 295.8L649.3 297.6M644.2 238.8L639.9 232.9M591.9 240.9L603.0 239.5M552.1 154.7L547.7 150.6M691.8 310.0L690.5 318.0M642.8 255.6L652.7 253.9M616.0 327.7L613.8 326.9M660.4 240.5L661.1 246.6M632.1 271.1L627.0 277.9M684.9 277.3L691.1 274.9M599.5 254.5L602.6 250.1M698.6 268.3L702.8 278.1M594.8 208.1L585.0 210.0M638.7 187.0L630.2 188.3M580.0 144.0L573.7 145.6M621.4 261.9L616.6 267.5M583.9 244.6L575.9 239.5M717.0 272.5L707.7 266.6M616.4 203.9L614.5 211.1M613.8 326.9L609.4 325.1M511.0 127.8L514.5 127.1M507.0 150.0L514.5 127.1M662.0 224.8L654.0 222.0M527.5 226.0L527.0 198.0M695.0 244.5L698.9 253.5M657.9 291.4L651.2 279.0M612.0 258.9L612.8 262.8M619.2 172.2L623.8 175.8M602.6 250.1L611.2 249.2M554.4 209.3L562.5 216.1M543.0 135.3L546.3 130.0M655.3 245.3L661.1 246.6M718.2 233.0L711.1 239.5M600.9 201.4L601.3 207.9M514.5 127.1L518.0 126.5M611.1 206.6L613.2 197.2M609.0 179.8L602.7 180.7M584.0 157.0L580.3 162.1M665.6 267.7L673.1 263.3M619.1 214.6L614.5 211.1M613.2 197.2L621.9 203.0M534.1 229.3L541.1 235.9M606.8 255.1L603.8 259.8M698.6 268.3L694.3 262.0M682.7 326.8L680.7 322.9M560.4 232.2L555.0 226.6M547.7 150.6L543.0 142.3M621.5 187.2L622.1 181.6M666.9 246.6L674.4 247.0M673.3 256.3L678.9 253.1M596.0 295.5L601.7 291.8M646.4 223.4L648.6 229.6M561.5 281.0L571.5 276.8M644.2 238.8L653.2 237.3M698.0 219.0L693.3 226.2M686.0 241.3L680.4 243.9M591.9 240.9L597.0 234.1M651.2 279.0L638.9 282.1M647.3 217.2L654.0 222.0M593.2 315.5L590.0 313.0M621.5 329.1L620.5 297.5M531.0 183.0L527.0 198.0M578.0 176.0L578.7 185.1M599.6 229.0L601.6 222.4M594.8 208.1L588.4 203.7M649.1 203.2L654.6 206.5M600.0 158.3L591.5 163.6M621.5 187.2L612.8 190.2M599.5 254.5L590.7 255.4M640.1 267.4L638.9 276.2M698.6 268.3L691.1 274.9M691.4 232.5L692.4 237.9M535.0 238.5L534.1 229.3M652.7 253.9L663.0 252.7M698.6 268.3L707.7 266.6M615.5 240.6L615.1 230.3M549.5 261.0L561.0 259.3M597.6 195.2L589.7 195.2M543.0 135.3L543.0 142.3M537.6 129.9L537.1 136.0M712.0 281.0L702.8 278.1M602.7 180.7L599.7 175.5M540.7 229.3L541.1 235.9M601.7 291.8L593.6 278.4M705.6 251.8L703.5 243.9M627.4 244.1L630.4 233.6M634.8 212.1L640.9 216.1M712.0 281.0L704.9 272.0M578.9 303.3L586.7 290.6M680.4 243.9L673.7 239.6M624.5 208.7L629.3 203.4M614.6 168.6L613.6 174.7M698.0 219.0L700.2 224.9M623.8 175.8L616.2 180.7M616.2 180.7L622.1 181.6M602.1 321.5L612.9 297.4M600.2 275.0L593.6 278.4M593.5 175.8L596.3 181.7M637.0 249.3L636.1 241.4M593.5 175.8L590.6 171.0M641.3 210.7L636.2 205.9M597.0 166.0L590.6 171.0M655.3 215.2L648.7 209.7M580.1 250.0L568.6 251.3M624.5 257.5L632.7 262.3M614.6 168.6L619.2 172.2M561.4 208.6L554.4 209.3M601.4 187.8L594.2 190.4M686.0 241.3L685.5 233.4M584.4 166.9L580.3 162.1M583.9 244.6L585.1 235.8M504.0 129.0L507.5 128.4M597.4 245.7L591.9 240.9M584.0 194.3L589.7 195.2M686.5 215.8L679.8 220.9M621.4 261.9L626.6 266.3M565.5 165.8L572.7 161.7M564.5 159.4L572.7 161.7M567.5 290.4L576.0 283.0M683.7 328.9L682.7 326.8M671.5 231.3L676.4 228.5M674.4 247.0L669.3 252.4M507.0 150.0L511.0 127.8M633.3 256.6L637.0 249.3M548.1 212.9L554.4 209.3M591.0 291.0L596.0 295.5M540.0 200.0L548.1 212.9M584.4 166.9L590.6 171.0M634.2 199.5L624.2 196.0M607.0 324.2L598.7 319.6M657.9 291.4L660.4 274.1M600.9 201.4L588.4 203.7M676.0 313.6L663.3 291.3M645.4 329.3L649.3 297.6M596.5 317.9L593.2 315.5M601.4 187.8L603.2 193.4M545.0 124.0L546.3 130.0M695.0 244.5L689.2 245.8M634.2 199.5L639.9 196.4M542.5 250.0L549.3 251.7M637.0 249.3L627.4 244.1M650.0 195.0L655.7 199.0M646.1 247.2L655.3 245.3M619.5 223.3L628.8 226.5M535.2 124.4L538.5 124.2M624.2 196.0L618.1 193.0M541.0 147.5L539.9 156.7M556.7 164.1L550.8 164.9M561.5 281.0L566.0 268.9M616.6 267.5L613.7 277.5M689.5 328.2L685.7 332.9M576.0 283.0L579.8 273.2M684.9 277.3L678.3 275.8M568.6 251.3L558.4 244.3M671.1 317.6L667.5 320.5M610.3 234.5L608.0 221.2M628.8 226.5L634.4 228.1M538.5 124.2L541.8 124.1M630.2 188.3L622.1 181.6M653.2 237.3L662.6 231.0M558.4 244.3L549.3 251.7M536.7 221.9L546.7 226.4M578.0 176.0L573.8 181.7M599.5 254.5L595.8 261.2M638.9 276.2L627.0 277.9M538.5 124.2L537.6 129.9M640.1 267.4L648.1 272.5M667.5 320.5L664.8 321.9M536.5 141.9L543.0 142.3M649.1 203.2L639.9 196.4M576.3 300.8L574.0 298.5M527.5 226.0L536.7 221.9M559.0 153.0L552.1 154.7M662.0 224.8L661.4 216.4M678.0 268.2L678.3 275.8M535.0 238.5L541.1 235.9M666.9 246.6L669.3 252.4M632.4 293.9L638.0 295.8M514.5 199.0L527.0 198.0M691.4 232.5L698.0 229.9M590.0 313.0L596.0 295.5M590.0 151.3L589.7 158.0M693.0 218.0L698.0 219.0M601.7 291.8L608.9 281.7M613.8 326.9L620.5 297.5M548.0 160.0L547.7 150.6M613.7 277.5L624.4 283.0M574.0 298.5L572.0 296.0M617.2 256.9L624.5 257.5M558.8 128.2L562.5 130.0M551.6 133.8L560.5 135.6M667.5 320.5L649.3 297.6M560.3 144.6L564.8 152.6M634.8 212.1L629.4 214.1M637.0 249.3L642.8 255.6M570.3 174.5L573.8 181.7M691.4 232.5L693.3 226.2M698.0 219.0L703.0 220.0M690.5 318.0L680.7 322.9M604.6 215.2L613.0 217.0M597.0 166.0L593.5 175.8M650.3 328.2L647.0 328.9M538.0 171.0L535.2 150.8M600.2 275.0L608.9 281.7M604.6 322.9L598.7 319.6M706.0 288.5L695.8 279.9M703.9 236.0L703.5 243.9M660.4 240.5L662.6 231.0M556.7 164.1L556.7 158.1M580.1 250.0L571.3 258.1M624.5 257.5L633.3 256.6M580.5 200.0L585.0 210.0M568.6 251.3L570.2 244.9M647.0 328.9L645.4 329.3M597.4 245.7L607.4 244.5M574.8 170.4L570.3 174.5M504.0 129.0L507.0 150.0M718.2 233.0L712.3 233.5M572.7 161.7L576.7 155.0M662.0 224.8L654.2 230.3M664.8 321.9L649.3 297.6M669.3 281.9L673.9 283.1M564.0 285.0L576.0 283.0M638.0 295.8L638.9 282.1M661.4 216.4L668.3 225.2M719.5 262.0L717.0 272.5M695.0 244.5L697.9 235.4M507.0 150.0L510.5 175.0M648.1 272.5L638.9 276.2M566.7 144.2L573.7 145.6M667.0 207.0L666.7 213.0M644.2 238.8L650.4 242.2M578.7 185.1L573.8 181.7M671.1 317.6L663.3 291.3M596.6 267.9L587.0 262.7M682.0 227.2L685.5 233.4M632.6 219.7L640.9 216.1M717.0 272.5L712.0 281.0M719.5 262.0L715.2 253.1M581.5 305.9L596.0 295.5M607.4 171.1L602.7 180.7M626.3 297.0L632.4 293.9M549.3 232.8L541.1 235.9M634.4 228.1L639.6 224.8M700.2 224.9L707.5 230.7M671.3 218.2L666.7 213.0M558.8 128.2L560.5 135.6M666.7 213.0L659.1 210.6M694.3 262.0L687.6 262.7M563.6 237.9L572.8 233.0M626.9 330.1L624.0 329.8M611.1 206.6L606.3 198.2M646.1 247.2L644.2 238.8M649.3 297.6L663.3 291.3M611.1 206.6L614.5 211.1M624.5 257.5L621.4 261.9M580.5 200.0L588.4 203.7M703.5 243.9L697.9 235.4M595.0 155.0L600.0 158.3M557.2 220.0L555.0 226.6M689.5 328.2L687.1 335.7M580.5 200.0L578.7 185.1M643.9 262.0L655.4 260.7M715.2 253.1L710.2 258.0M594.2 190.4L596.3 181.7M585.1 229.9L579.7 224.4M574.8 170.4L584.4 166.9M535.0 238.5L527.5 226.0M703.9 236.0L711.1 239.5M671.5 231.3L668.3 225.2M552.0 186.0L554.4 209.3M663.3 291.3L669.3 281.9M634.4 228.1L632.6 219.7M597.6 195.2L600.9 201.4M581.2 256.4L577.9 264.8M569.4 209.5L576.6 205.7M568.7 266.7L579.8 273.2M711.1 239.5L712.3 233.5M617.2 256.9L620.2 252.2M566.0 268.9L555.9 264.0M586.5 221.8L590.1 214.5M543.0 142.3L537.1 136.0M694.3 262.0L704.5 261.0M644.3 191.0L639.9 196.4M630.4 233.6L628.8 226.5M548.1 243.6L555.4 237.8M655.3 245.3L653.2 237.3M548.1 243.6L541.4 243.1M690.5 318.0L682.7 326.8M591.5 163.6L589.7 158.0M667.0 207.0L659.1 210.6M608.2 291.0L616.9 295.4M549.6 142.8L547.7 150.6M565.6 227.5L555.0 226.6M608.0 221.2L613.0 217.0M623.8 237.0L619.5 223.3M590.0 151.3L584.0 157.0M704.9 272.0L702.8 278.1M585.1 229.9L586.5 221.8M613.2 197.2L618.1 193.0M586.5 221.8L579.7 224.4M669.3 281.9L671.8 271.9M671.5 231.3L673.7 239.6M586.6 310.2L581.5 305.9M659.0 325.0L649.3 297.6M603.8 259.8L605.3 265.6M623.8 175.8L622.1 181.6M571.3 258.1L561.0 259.3M686.0 241.3L692.4 237.9M689.3 251.3L689.2 245.8M564.0 285.0L571.5 276.8M597.6 195.2L594.2 190.4M695.0 244.5L703.5 243.9M615.5 240.6L623.8 237.0M653.8 267.1L660.4 274.1M628.2 250.8L627.4 244.1M629.2 330.4L626.9 330.1M666.9 246.6L661.1 246.6M682.0 227.2L679.8 220.9M693.3 226.2L687.6 227.8M590.0 151.3L595.0 155.0M632.6 219.7L629.4 214.1M611.1 206.6L616.4 203.9M645.4 329.3L638.0 295.8M643.2 293.9L654.2 292.9M634.2 199.5L629.3 203.4M624.2 196.0L629.3 203.4M682.0 227.2L676.4 228.5M698.0 296.5L684.9 277.3M608.5 271.4L600.2 275.0M690.5 318.0L689.5 328.2M620.2 252.2L628.2 250.8M597.6 195.2L603.2 193.4M565.6 227.5L557.2 220.0M611.1 206.6L605.6 204.4M561.4 208.6L569.9 201.1M616.4 203.9L621.9 203.0M553.3 147.2L555.4 139.6M571.0 151.0L579.2 149.6M643.9 262.0L652.7 253.9M609.4 325.1L607.0 324.2M671.5 231.3L662.6 231.0M556.0 271.5L555.9 264.0M570.9 222.9L579.7 224.4M576.8 212.5L579.7 224.4M644.2 238.8L648.6 229.6M572.8 233.0L565.6 227.5M571.5 276.8L576.0 283.0M650.3 328.2L649.3 297.6M623.8 175.8L628.4 179.4M704.9 272.0L698.6 268.3M619.1 214.6L613.0 217.0M597.1 217.1L601.6 222.4M599.6 229.0L608.0 221.2M585.1 235.8L585.1 229.9M510.5 175.0L535.2 150.8M624.0 329.8L626.3 297.0M610.0 165.0L607.4 171.1M634.2 192.9L639.9 196.4M661.4 216.4L659.1 210.6M612.0 253.1L612.0 258.9M618.7 246.4L615.5 240.6M605.3 265.6L595.8 261.2M560.3 144.6L560.5 135.6M612.0 253.1L611.2 249.2M624.2 196.0L630.2 188.3M571.0 151.0L564.8 152.6M680.7 322.9L679.3 320.1M660.4 274.1L671.8 271.9M611.2 249.2L607.4 244.5M597.0 234.1L599.6 229.0M619.5 223.3L619.1 214.6M571.0 151.0L576.7 155.0M661.3 203.0L667.0 207.0M703.9 236.0L698.0 229.9M660.4 240.5L653.2 237.3M586.5 221.8L582.5 216.6M663.0 252.7L669.3 252.4M576.8 212.5L569.4 209.5M671.8 271.9L673.1 263.3M695.0 244.5L692.4 237.9M646.1 247.2L652.7 253.9M694.3 262.0L698.9 253.5M620.2 252.2L624.5 257.5M643.2 204.2L648.7 209.7M565.6 227.5L560.4 232.2M541.1 235.9L541.4 243.1M627.4 244.1L623.8 237.0M591.0 291.0L593.6 278.4M708.7 225.1L712.3 233.5M608.2 291.0L612.9 297.4M628.4 179.4L630.2 188.3M555.0 226.6L546.7 226.4M542.5 250.0L535.0 238.5M691.8 310.0L678.0 317.5M540.0 200.0L541.9 216.0M564.0 285.0L561.5 281.0M671.3 218.2L679.8 220.9M679.8 220.9L686.9 222.3M624.4 283.0L608.9 281.7M572.0 296.0L580.8 285.0M609.0 179.8L613.6 174.7M655.4 260.7L666.5 260.4M594.3 223.1L601.6 222.4M584.0 157.0L576.7 155.0M674.4 247.0L673.7 239.6M571.3 258.1L568.7 266.7M628.2 250.8L633.3 256.6M621.0 272.5L613.7 277.5M566.0 268.9L571.5 276.8M549.6 142.8L553.3 147.2M540.7 229.3L536.7 221.9M569.9 201.1L569.4 209.5M580.5 200.0L576.6 205.7M575.9 239.5L572.8 233.0M653.8 267.1L665.6 267.7M693.1 268.4L685.9 270.1M545.0 124.0L548.3 124.8M571.5 276.8L568.7 266.7M559.0 153.0L556.7 158.1M587.4 180.3L596.3 181.7M587.9 270.6L579.8 273.2M525.0 125.5L536.5 141.9M600.9 201.4L606.3 198.2M586.5 221.8L594.3 223.1M643.2 293.9L649.3 297.6M624.2 216.6L619.5 223.3M518.0 126.5L521.5 126.0M576.8 212.5L582.5 216.6M565.0 176.0L570.3 174.5M569.6 293.0L567.5 290.4M636.1 241.4L646.1 247.2M610.0 165.0L601.7 169.1M620.2 252.2L618.7 246.4M674.4 247.0L680.4 243.9M713.1 263.0L710.2 258.0M705.6 251.8L710.2 258.0M612.8 190.2L603.2 193.4M643.9 262.0L640.1 267.4M612.8 262.8L616.6 267.5M601.7 291.8L608.2 291.0M641.3 210.7L640.9 216.1M549.3 251.7L548.1 243.6M585.0 210.0L590.1 214.5M577.9 264.8L579.8 273.2M538.0 171.0L548.0 160.0M603.0 239.5L610.3 234.5M638.9 282.1L624.4 283.0M632.6 219.7L634.8 212.1M552.0 186.0L573.8 181.7M590.0 313.0L586.6 310.2M666.9 246.6L673.7 239.6M532.0 124.5L537.6 129.9M548.0 160.0L539.9 156.7M655.7 199.0L649.1 203.2M548.7 220.1L541.9 216.0M624.5 208.7L616.4 203.9M697.9 235.4L692.4 237.9M618.7 246.4L628.2 250.8M719.5 262.0L713.1 263.0M685.9 270.1L687.6 262.7M585.1 235.8L572.8 233.0M569.1 216.1L569.4 209.5M720.0 240.0L711.1 239.5M570.0 135.0L566.7 144.2M612.0 253.1L617.2 256.9M569.9 201.1L576.6 205.7M550.8 164.9L556.7 158.1M639.9 232.9L648.6 229.6M541.8 124.1L545.0 124.0M607.0 324.2L612.9 297.4M660.4 240.5L666.9 246.6M540.7 229.3L546.7 226.4M664.8 321.9L662.6 323.1M666.5 260.4L673.3 256.3M666.7 213.0L661.4 216.4M638.0 295.8L643.2 293.9M536.5 141.9L541.0 147.5M647.3 217.2L641.3 210.7M684.9 277.3L695.8 279.9M564.5 159.4L556.7 158.1M596.5 317.9L596.0 295.5M720.0 240.0L715.5 244.0M646.4 223.4L654.0 222.0M626.3 297.0L624.4 283.0M642.8 255.6L646.1 247.2M574.8 170.4L572.7 161.7M612.8 190.2L618.1 193.0M632.1 271.1L638.9 276.2M604.6 322.9L612.9 297.4M536.7 221.9L534.1 229.3M693.1 268.4L698.6 268.3M552.0 186.0L569.9 201.1M655.4 260.7L663.0 252.7M619.2 172.2L613.6 174.7M653.2 237.3L650.4 242.2M706.0 288.5L702.8 278.1M621.0 272.5L627.0 277.9M525.0 125.5L537.1 136.0M584.4 166.9L583.4 172.9M673.3 256.3L679.1 259.2M632.7 262.3L632.1 271.1M587.4 180.3L593.5 175.8M599.7 175.5L601.7 169.1M588.1 188.7L584.0 194.3M636.1 241.4L639.9 232.9M576.3 300.8L586.7 290.6M703.0 220.0L716.5 226.0M703.0 220.0L700.2 224.9M663.0 252.7L661.1 246.6M587.9 270.6L593.6 278.4M713.1 263.0L704.5 261.0M588.4 203.7L585.0 210.0M705.6 251.8L704.5 261.0M626.6 266.3L621.0 272.5M600.9 201.4L605.6 204.4M607.4 171.1L601.7 169.1M590.7 255.4L580.1 250.0M578.0 176.0L587.4 180.3M679.1 235.4L686.0 241.3M624.5 208.7L614.5 211.1M698.6 268.3L695.8 279.9M655.7 199.0L661.3 203.0M591.9 240.9L585.1 235.8M609.0 179.8L607.6 187.6M553.3 147.2L560.3 144.6M579.2 149.6L573.7 145.6M561.4 208.6L562.5 216.1M585.0 210.0L582.5 216.6M671.3 218.2L661.4 216.4M570.2 244.9L563.6 237.9M603.0 239.5L597.0 234.1M632.6 219.7L639.6 224.8M652.7 253.9L655.3 245.3M686.5 215.8L686.9 222.3M617.9 328.2L620.5 297.5M587.4 180.3L578.7 185.1M597.0 234.1L594.3 223.1M655.3 245.3L650.4 242.2M697.9 235.4L698.0 229.9M527.5 226.0L534.1 229.3M693.1 268.4L687.6 262.7M615.1 230.3L619.5 223.3M671.8 271.9L678.3 275.8M543.0 135.3L537.1 136.0M692.4 237.9L689.2 245.8M655.3 245.3L660.4 240.5M549.6 142.8L555.4 139.6M541.8 124.1L537.6 129.9M606.8 255.1L611.2 249.2M594.2 190.4L589.7 195.2M643.2 204.2L636.2 205.9M572.0 296.0L569.6 293.0M580.0 144.0L579.2 149.6M556.0 271.5L566.0 268.9M679.1 259.2L687.6 262.7M580.8 285.0L579.8 273.2M685.5 255.4L687.6 262.7M642.8 255.6L643.9 262.0M595.0 155.0L589.7 158.0M607.4 171.1L613.6 174.7M579.7 224.4L582.5 216.6M559.0 153.0L560.3 144.6M588.1 188.7L596.3 181.7M598.7 319.6L612.9 297.4M531.0 183.0L538.0 171.0M674.2 223.4L676.4 228.5M634.2 192.9L630.2 188.3M570.2 244.9L575.9 239.5M572.8 233.0L570.9 222.9M645.4 329.3L642.0 330.0M565.5 165.8L560.0 169.6M585.1 235.8L597.0 234.1M586.6 310.2L596.0 295.5M507.0 150.0L507.5 128.4M621.5 187.2L624.2 196.0M609.4 325.1L620.5 297.5M552.0 186.0L550.8 164.9M662.0 224.8L668.3 225.2M683.1 248.7L685.5 255.4M510.5 175.0L514.5 199.0M683.1 248.7L674.4 247.0M542.5 250.0L541.4 243.1M616.9 295.4L608.9 281.7M576.8 212.5L585.0 210.0M632.7 262.3L640.1 267.4M666.5 260.4L665.6 267.7M708.7 225.1L707.5 230.7M587.0 262.7L581.2 256.4M712.0 281.0L706.0 288.5M663.3 291.3L660.4 274.1M673.2 315.9L663.3 291.3M549.3 232.8L546.7 226.4M590.7 255.4L591.3 249.7M621.5 187.2L618.1 193.0M549.3 232.8L555.4 237.8M527.0 198.0L540.0 200.0M705.6 251.8L698.9 253.5M693.0 302.0L676.0 313.6M558.4 244.3L555.4 237.8M655.3 215.2L659.1 210.6M572.8 233.0L585.1 229.9M548.3 124.8L546.3 130.0M568.6 251.3L557.5 251.6M624.0 329.8L621.5 329.1M604.6 215.2L597.1 217.1M548.7 220.1L555.0 226.6M551.6 133.8L546.3 130.0M671.3 218.2L674.2 223.4M653.2 237.3L648.6 229.6M655.4 260.7L653.8 267.1M703.5 243.9L710.9 248.1M643.2 293.9L638.9 282.1M682.0 227.2L679.1 235.4M621.4 261.9L612.8 262.8M600.0 158.3L605.0 161.7M584.0 157.0L589.7 158.0M628.8 226.5L632.6 219.7M680.0 213.5L671.3 218.2M616.9 295.4L620.5 297.5M584.0 194.3L580.5 200.0M647.3 217.2L648.7 209.7M693.0 302.0L673.9 283.1M570.2 244.9L558.4 244.3M558.8 128.2L551.6 133.8M654.2 230.3L662.6 231.0M638.9 276.2L638.9 282.1M703.9 236.0L707.5 230.7M688.5 338.5L687.1 335.7M713.1 263.0L715.2 253.1M705.6 251.8L715.2 253.1M538.0 171.0L550.8 164.9M632.7 262.3L626.6 266.3M536.5 141.9L537.1 136.0M596.6 267.9L587.9 270.6M576.0 283.0L580.8 285.0M613.0 217.0L614.5 211.1M608.0 221.2L604.6 215.2M663.0 252.7L666.5 260.4M654.2 292.9L663.3 291.3M604.6 322.9L602.1 321.5M641.3 210.7L643.2 204.2M572.7 161.7L580.3 162.1M559.0 153.0L564.5 159.4M641.3 210.7L634.8 212.1M587.0 262.7L577.9 264.8M693.0 302.0L684.9 277.3M612.8 190.2L607.6 187.6M595.8 261.2L590.7 255.4M580.8 285.0L593.6 278.4M596.0 295.5L612.9 297.4M655.3 215.2L654.6 206.5M624.5 257.5L628.2 250.8M678.0 268.2L679.1 259.2M595.8 261.2L587.0 262.7M548.7 220.1L557.2 220.0M619.1 214.6L624.5 208.7M610.3 234.5L615.1 230.3M604.6 215.2L601.3 207.9M683.1 248.7L689.2 245.8M703.0 220.0L708.7 225.1M612.9 297.4L620.5 297.5M698.0 296.5L695.8 279.9M685.5 255.4L689.3 251.3M569.9 201.1L578.7 185.1M652.7 253.9L655.4 260.7M649.1 203.2L648.7 209.7M578.0 176.0L583.4 172.9M599.5 254.5L597.4 245.7M565.5 165.8L556.7 164.1M564.5 159.4L556.7 164.1M556.7 164.1L560.0 169.6M635.8 330.6L629.2 330.4M565.0 176.0L565.5 165.8M683.1 248.7L686.0 241.3M627.4 244.1L636.1 241.4M662.0 224.8L662.6 231.0M648.1 272.5L651.2 279.0M570.9 222.9L569.1 216.1M576.8 212.5L569.1 216.1M650.0 195.0L639.9 196.4M716.5 226.0L708.7 225.1M646.4 223.4L640.9 216.1M673.5 210.2L666.7 213.0M616.9 295.4L624.4 283.0M597.6 195.2L588.4 203.7M518.0 126.5L536.5 141.9M584.4 166.9L589.7 158.0M616.2 180.7L613.6 174.7M600.0 158.3L597.0 166.0M584.0 157.0L584.4 166.9M566.0 268.9L561.0 259.3M593.6 278.4L579.8 273.2M655.7 199.0L654.6 206.5M695.8 279.9L702.8 278.1M646.4 223.4L639.6 224.8M630.4 233.6L639.9 232.9M588.1 188.7L578.7 185.1M559.0 153.0L553.3 147.2M597.0 166.0L601.7 169.1M607.6 187.6L603.2 193.4M674.2 223.4L668.3 225.2M655.3 215.2L654.0 222.0M691.4 232.5L697.9 235.4M562.5 130.0L560.5 135.6M673.9 283.1L684.9 277.3M634.2 192.9L624.2 196.0M656.8 325.8L649.3 297.6M679.1 235.4L671.5 231.3M689.5 328.2L688.5 338.5M568.6 251.3L561.0 259.3M580.1 250.0L575.9 239.5M704.9 272.0L707.7 266.6M569.6 293.0L580.8 285.0M565.5 165.8L564.5 159.4M557.2 220.0L554.4 209.3M555.4 139.6L560.5 135.6M607.0 324.2L604.6 322.9M591.5 163.6L584.4 166.9M563.6 237.9L560.4 232.2M654.2 230.3L648.6 229.6M693.9 256.2L687.6 262.7M537.6 129.9L546.3 130.0M507.0 150.0L518.0 126.5M633.3 256.6L643.9 262.0M628.4 179.4L633.0 183.0M639.9 232.9L639.6 224.8M673.9 283.1L678.3 275.8M682.0 227.2L686.9 222.3M584.0 157.0L579.2 149.6M666.5 260.4L673.1 263.3M605.3 265.6L596.6 267.9M601.4 187.8L607.6 187.6M601.4 187.8L596.3 181.7M521.5 126.0L525.0 125.5M596.6 267.9L600.2 275.0M679.1 259.2L685.5 255.4M585.1 229.9L594.3 223.1M635.8 330.6L638.0 295.8M685.9 270.1L691.1 274.9M562.5 216.1L569.4 209.5M633.0 183.0L638.7 187.0M684.9 277.3L685.9 270.1M679.3 320.1L678.0 317.5M564.5 159.4L564.8 152.6M693.0 218.0L693.3 226.2M609.0 179.8L616.2 180.7M695.8 279.9L691.1 274.9M525.0 125.5L528.5 125.0M552.0 186.0L560.0 169.6M580.5 200.0L569.9 201.1M678.0 317.5L676.0 313.6M595.0 155.0L591.5 163.6M586.6 310.2L584.9 308.7M610.3 234.5L599.6 229.0M689.5 328.2L682.7 326.8M703.5 243.9L711.1 239.5M574.8 170.4L580.3 162.1M612.9 297.4L616.9 295.4M711.1 239.5L710.9 248.1M713.1 263.0L707.7 266.6M621.5 329.1L626.3 297.0M667.0 207.0L673.5 210.2M569.9 201.1L573.8 181.7M615.5 240.6L610.3 234.5M614.6 168.6L607.4 171.1M536.7 221.9L541.9 216.0M584.9 308.7L581.5 305.9M673.9 283.1L671.8 271.9M599.5 254.5L591.3 249.7M655.3 215.2L647.3 217.2M629.3 203.4L629.4 214.1M621.9 203.0L618.1 193.0M623.8 237.0L628.8 226.5M628.4 179.4L622.1 181.6M575.0 139.5L573.7 145.6M691.4 232.5L687.6 227.8M633.3 256.6L632.7 262.3M514.5 199.0L531.0 183.0M566.7 144.2L564.8 152.6M634.4 228.1L639.9 232.9M673.5 210.2L680.0 213.5M540.7 229.3L534.1 229.3M717.0 272.5L704.9 272.0M662.6 323.1L659.0 325.0M634.8 212.1L629.3 203.4M582.5 216.6L590.1 214.5M648.1 272.5L660.4 274.1M581.5 305.9L586.7 290.6M639.6 224.8L640.9 216.1M587.4 180.3L590.6 171.0M666.5 260.4L669.3 252.4M548.3 124.8L551.7 125.7M703.9 236.0L712.3 233.5M703.5 243.9L698.9 253.5M617.2 256.9L612.8 262.8M607.4 171.1L599.7 175.5M608.5 271.4L613.7 277.5M659.0 325.0L656.8 325.8M660.4 240.5L666.9 238.6M690.5 318.0L678.0 317.5M576.8 212.5L576.6 205.7M649.3 297.6L654.2 292.9M543.0 135.3L551.6 133.8M608.5 271.4L608.9 281.7M716.5 226.0L718.2 233.0M591.3 249.7L591.9 240.9M685.5 233.4L687.6 227.8M594.8 208.1L600.9 201.4M560.4 232.2L555.4 237.8M567.5 290.4L566.0 288.1M654.2 292.9L651.2 279.0M624.5 257.5L626.6 266.3M580.1 250.0L570.2 244.9M569.6 293.0L576.0 283.0M624.2 216.6L632.6 219.7M679.1 259.2L673.1 263.3M640.1 267.4L632.1 271.1M565.6 227.5L562.5 216.1M628.2 250.8L637.0 249.3M718.2 233.0L720.0 240.0M597.4 245.7L603.0 239.5M661.4 216.4L654.0 222.0M553.3 147.2L552.1 154.7M639.6 224.8L648.6 229.6M704.5 261.0L710.2 258.0M679.1 235.4L673.7 239.6M549.5 261.0L555.9 264.0M693.1 268.4L694.3 262.0M679.8 220.9L676.4 228.5M528.5 125.0L537.1 136.0M647.0 328.9L649.3 297.6M621.5 187.2L630.2 188.3M568.7 266.7L561.0 259.3M633.3 256.6L642.8 255.6M591.0 291.0L601.7 291.8M639.5 330.2L635.8 330.6M693.9 256.2L689.3 251.3M607.4 171.1L609.0 179.8M597.0 234.1L585.1 229.9M605.3 265.6L608.5 271.4M615.1 230.3L608.0 221.2M549.5 261.0L549.3 251.7M634.2 199.5L636.2 205.9M624.5 208.7L621.9 203.0M617.2 256.9L612.0 258.9M575.0 139.5L580.0 144.0M616.2 180.7L607.6 187.6M561.0 259.3L557.5 251.6M707.5 230.7L698.0 229.9M527.0 198.0L536.7 221.9M561.5 281.0L556.0 271.5M693.1 268.4L691.1 274.9M698.9 253.5L689.3 251.3M601.4 187.8L597.6 195.2M655.3 215.2L661.4 216.4M653.2 237.3L654.2 230.3M575.0 139.5L566.7 144.2M580.1 250.0L583.9 244.6M619.2 172.2L616.2 180.7M689.5 328.2L683.7 328.9M570.9 222.9L565.6 227.5M552.0 186.0L565.0 176.0M565.0 176.0L573.8 181.7M583.4 172.9L590.6 171.0M535.2 124.4L537.6 129.9M643.9 262.0L648.1 272.5M633.0 183.0L630.2 188.3M583.9 244.6L591.9 240.9M679.1 235.4L680.4 243.9M597.0 166.0L591.5 163.6M575.9 239.5L563.6 237.9M686.0 241.3L689.2 245.8M593.2 315.5L596.0 295.5M543.0 135.3L537.6 129.9M514.5 199.0L527.5 226.0M548.1 212.9L557.2 220.0M693.9 256.2L698.9 253.5M616.0 327.7L620.5 297.5M621.0 272.5L624.4 283.0M606.3 198.2L605.6 204.4M553.3 147.2L547.7 150.6M601.7 291.8L600.2 275.0M671.1 317.6L649.3 297.6M685.9 270.1L678.3 275.8M693.3 226.2L698.0 229.9M580.3 162.1L576.7 155.0M612.8 190.2L613.2 197.2M586.7 290.6L596.0 295.5M561.0 259.3L555.9 264.0M612.8 190.2L616.2 180.7M588.1 188.7L589.7 195.2M613.7 277.5L608.9 281.7M617.2 256.9L621.4 261.9M611.2 249.2L615.5 240.6M630.4 233.6L634.4 228.1M539.9 156.7L547.7 150.6M683.1 248.7L689.3 251.3M591.5 163.6L590.6 171.0M632.4 293.9L624.4 283.0M707.5 230.7L712.3 233.5M680.0 213.5L679.8 220.9M683.1 248.7L678.9 253.1M690.5 318.0L679.3 320.1M613.2 197.2L606.3 198.2M616.6 267.5L608.5 271.4M541.8 124.1L546.3 130.0M716.5 226.0L712.3 233.5M634.2 192.9L634.2 199.5M685.5 233.4L692.4 237.9M666.9 238.6L673.7 239.6M578.0 176.0L570.3 174.5M566.0 288.1L576.0 283.0M591.3 249.7L583.9 244.6M642.0 330.0L639.5 330.2M571.0 151.0L572.7 161.7M570.9 222.9L576.8 212.5M624.2 216.6L628.8 226.5M565.5 165.8L574.8 170.4M703.9 236.0L697.9 235.4M693.9 256.2L685.5 255.4M585.0 210.0L576.6 205.7M570.0 135.0L575.0 139.5M507.0 150.0L536.5 141.9M678.0 268.2L687.6 262.7M679.1 235.4L685.5 233.4M597.1 217.1L590.1 214.5M594.8 208.1L590.1 214.5M686.9 222.3L687.6 227.8M581.2 256.4L580.1 250.0M624.2 216.6L629.4 214.1M706.0 288.5L698.0 296.5M634.8 212.1L636.2 205.9M548.0 160.0L552.1 154.7M717.0 272.5L713.1 263.0M535.0 238.5L541.4 243.1M571.5 276.8L579.8 273.2M626.3 297.0L638.0 295.8M540.0 200.0L552.0 186.0M711.1 239.5L715.5 244.0M673.3 256.3L674.4 247.0M606.3 198.2L603.2 193.4M635.8 330.6L626.3 297.0M674.2 223.4L679.8 220.9M698.0 296.5L693.0 302.0M627.0 277.9L624.4 283.0M589.7 195.2L588.4 203.7M621.5 329.1L617.9 328.2M557.5 251.6L549.3 251.7M647.3 217.2L646.4 223.4M600.9 201.4L603.2 193.4M612.8 262.8L603.8 259.8M671.5 231.3L666.9 238.6M605.0 161.7L610.0 165.0M504 129L507 150L510.5 175L514.5 199M480.3 134.3L492 131L504 129L518 126.5L532 124.5L545 124L555 126.5L562.5 130" fill="none" stroke="#959595" stroke-width="1.15" stroke-linejoin="round"/></g>
<polygon points="711.5,220.5 716.5,226 720,240 720.8,251 719.5,262 717,272.5 712,281 706,288.5 698,296.5 694,300 695.8,284.4 697.5,270 699,258.6 700.5,247 702.5,235" fill="url(#gr2)" stroke="#8a8a8a" stroke-width="0.8"/>
<path d="M711.0 221.0L712.4 249.9M709.1 229.8L710.2 257.1M707.2 238.6L708.0 264.2M705.3 247.3L705.8 271.4M703.4 256.1L703.6 278.6M701.6 264.9L701.3 285.8M699.7 273.7L699.1 292.9M697.8 282.4L698.0 296.5M695.9 291.2L698.0 296.5" fill="none" stroke="#8f8f8f" stroke-width="0.9"/>
<clipPath id="cpf"><polygon points="602.9,183 615.8,198.2 631,215.5 641.8,230.7 652.6,252.3 663.5,276 674.3,302 683,323.8 688.5,338.5 690.5,322 692.4,306.7 695.8,284.4 697.5,270 699,258.6 700.5,247 702.5,235 711.5,220.5 703,220 693,218 680,213.5 667,207 650,195 633,183 610,165"/></clipPath>
<polygon points="602.9,183 615.8,198.2 631,215.5 641.8,230.7 652.6,252.3 663.5,276 674.3,302 683,323.8 688.5,338.5 690.5,322 692.4,306.7 695.8,284.4 697.5,270 699,258.6 700.5,247 702.5,235 711.5,220.5 703,220 693,218 680,213.5 667,207 650,195 633,183 610,165" fill="url(#gf2)"/>
<polyline points="602.9,183 615.8,198.2 631,215.5 641.8,230.7 652.6,252.3 663.5,276 674.3,302 683,323.8 688.5,338.5 690.5,322 692.4,306.7 695.8,284.4 697.5,270 699,258.6 700.5,247 702.5,235 711.5,220.5" fill="none" stroke="#8a8a8a" stroke-width="1.1"/>
<g clip-path="url(#cpf)"><path d="M673.5 210.2L672.4 220.2M661.1 219.7L663.2 228.5M680.0 213.5L681.6 220.7M628.4 179.4L623.8 175.8M628.3 203.5L634.3 205.6M609.3 190.6L615.1 192.2M652.6 252.3L658.0 264.1M640.3 198.5L639.8 205.5M650.0 195.0L644.3 191.0M657.9 232.6L659.4 244.8M602.9 183.0L611.2 177.0M698.0 219.0L689.6 224.5M699.0 258.6L687.0 261.0M671.7 228.3L673.0 234.3M636.4 223.1L637.8 215.6M685.0 243.9L681.9 253.0M644.3 191.0L638.7 187.0M647.2 241.5L650.5 227.3M628.3 203.5L629.3 209.1M690.5 322.0L691.5 314.4M625.8 187.4L620.9 190.2M686.7 231.7L690.3 239.1M612.9 186.4L617.1 179.1M659.4 244.8L665.9 240.5M686.5 215.8L689.6 224.5M634.3 205.6L639.8 205.5M675.3 264.7L674.3 255.2M615.8 198.2L623.2 199.2M678.6 312.9L683.0 323.8M658.0 264.1L663.5 276.0M640.3 198.5L635.0 200.1M639.8 205.5L635.0 200.1M693.2 234.0L690.3 239.1M625.8 193.3L625.8 187.4M681.6 220.7L676.4 224.7M657.9 232.6L663.2 228.5M667.0 207.0L666.1 216.0M674.8 247.1L675.7 239.7M612.9 186.4L618.8 185.1M618.8 185.1L617.1 179.1M683.0 323.8L688.5 338.5M687.0 261.0L681.9 253.0M657.9 232.6L667.3 234.6M614.6 168.6L610.0 165.0M644.3 191.0L633.6 194.7M634.3 205.6L635.0 200.1M638.7 187.0L633.0 183.0M648.8 207.3L641.2 211.0M663.5 276.0L664.2 259.2M685.0 243.9L674.8 247.1M678.6 234.1L673.0 234.3M641.2 211.0L646.5 212.5M707.0 227.8L698.7 226.6M661.3 203.0L655.7 199.0M610.0 165.0L607.6 171.0M667.1 284.7L675.3 264.7M675.7 239.7L673.0 234.3M652.1 215.2L646.5 212.5M625.8 193.3L633.6 194.7M667.6 250.7L674.3 255.2M673.0 234.3L665.9 240.5M647.2 241.5L657.9 232.6M674.3 255.2L664.2 259.2M660.8 212.8L666.1 216.0M671.7 228.3L663.2 228.5M693.2 247.5L696.2 240.9M674.3 302.0L693.5 299.3M683.0 323.8L690.5 322.0M628.4 179.4L625.8 187.4M688.5 338.5L689.5 330.2M644.0 217.6L637.8 215.6M611.2 177.0L617.1 179.1M656.0 223.3L663.2 228.5M672.4 220.2L671.7 228.3M648.8 207.3L655.4 207.2M644.0 217.6L648.0 222.4M667.0 207.0L660.8 212.8M691.9 253.0L693.2 247.5M678.6 234.1L682.9 227.2M691.9 253.0L681.9 253.0M670.7 293.3L674.3 302.0M678.6 234.1L686.7 231.7M694.7 291.8L695.8 284.4M670.7 293.3L694.7 291.8M678.6 312.9L691.5 314.4M607.6 171.0L605.3 177.0M695.8 284.4L688.9 271.6M670.7 293.3L688.9 271.6M644.0 217.6L641.2 211.0M650.0 195.0L645.3 201.7M657.9 232.6L665.9 240.5M674.3 302.0L678.6 312.9M623.8 175.8L619.2 172.2M698.0 219.0L698.7 226.6M631.0 215.5L629.3 209.1M647.2 241.5L659.4 244.8M623.8 175.8L623.2 181.5M631.2 189.6L625.8 187.4M634.3 205.6L629.3 209.1M693.2 234.0L689.6 224.5M659.4 244.8L667.6 250.7M655.7 199.0L655.4 207.2M697.5 270.0L688.9 271.6M673.0 234.3L667.3 234.6M620.9 190.2L615.1 192.2M645.3 201.7L648.8 207.3M615.8 198.2L620.9 190.2M636.4 223.1L648.0 222.4M602.9 183.0L605.3 177.0M707.0 227.8L703.0 220.0M687.0 261.0L675.3 264.7M619.2 172.2L614.6 168.6M695.8 284.4L696.6 277.2M680.0 213.5L672.4 220.2M685.0 243.9L684.9 238.3M700.5 247.0L691.9 253.0M689.6 224.5L681.6 220.7M691.5 314.4L692.4 306.7M628.3 203.5L633.6 194.7M672.4 220.2L667.4 223.3M696.6 277.2L697.5 270.0M645.3 201.7L639.8 205.5M645.3 201.7L640.3 198.5M625.8 187.4L618.8 185.1M631.2 189.6L633.6 194.7M652.6 252.3L664.2 259.2M674.8 247.1L665.9 240.5M652.1 215.2L661.1 219.7M652.1 215.2L656.0 223.3M692.4 306.7L693.5 299.3M671.7 228.3L667.4 223.3M615.8 198.2L615.1 192.2M660.8 212.8L655.4 207.2M685.0 243.9L675.7 239.7M623.2 181.5L625.8 187.4M684.9 238.3L690.3 239.1M693.0 218.0L689.6 224.5M657.9 232.6L656.0 223.3M648.8 207.3L639.8 205.5M647.2 241.5L652.6 252.3M625.8 193.3L623.2 199.2M711.5 220.5L703.0 220.0M678.6 234.1L671.7 228.3M702.5 235.0L696.2 240.9M697.5 270.0L699.0 258.6M655.7 199.0L648.8 207.3M678.6 234.1L684.9 238.3M641.2 211.0L637.8 215.6M671.7 228.3L667.3 234.6M699.0 258.6L700.5 247.0M693.5 299.3L694.7 291.8M703.0 220.0L698.0 219.0M675.7 239.7L684.9 238.3M657.9 232.6L650.5 227.3M685.0 243.9L691.9 253.0M661.1 219.7L656.0 223.3M689.5 330.2L690.5 322.0M675.3 264.7L664.2 259.2M682.9 227.2L676.4 224.7M700.5 247.0L702.5 235.0M623.2 181.5L617.1 179.1M702.5 235.0L698.7 226.6M602.9 183.0L612.9 186.4M685.0 243.9L690.3 239.1M638.7 187.0L633.6 194.7M614.6 168.6L607.6 171.0M678.6 234.1L675.7 239.7M636.4 223.1L644.0 217.6M702.5 235.0L693.2 234.0M640.3 198.5L633.6 194.7M641.2 211.0L639.8 205.5M636.4 223.1L641.8 230.7M619.2 172.2L617.1 179.1M644.3 191.0L640.3 198.5M675.7 239.7L665.9 240.5M605.3 177.0L611.2 177.0M661.1 219.7L666.1 216.0M638.7 187.0L631.2 189.6M687.0 261.0L691.9 253.0M675.3 264.7L688.9 271.6M682.9 227.2L681.6 220.7M609.3 190.6L615.8 198.2M623.2 181.5L618.8 185.1M633.6 194.7L635.0 200.1M672.4 220.2L676.4 224.7M674.3 255.2L681.9 253.0M702.5 235.0L707.0 227.8M700.5 247.0L693.2 247.5M609.3 190.6L612.9 186.4M650.5 227.3L656.0 223.3M667.6 250.7L664.2 259.2M674.8 247.1L667.6 250.7M667.1 284.7L688.9 271.6M641.8 230.7L650.5 227.3M652.1 215.2L655.4 207.2M671.7 228.3L676.4 224.7M707.0 227.8L711.5 220.5M670.7 293.3L695.8 284.4M611.2 177.0L612.9 186.4M628.4 179.4L623.2 181.5M689.6 224.5L682.9 227.2M633.0 183.0L631.2 189.6M672.4 220.2L681.6 220.7M689.6 224.5L686.7 231.7M697.5 270.0L687.0 261.0M693.2 234.0L686.7 231.7M615.8 198.2L623.4 206.8M625.8 193.3L620.9 190.2M628.3 203.5L625.8 193.3M641.8 230.7L648.0 222.4M652.6 252.3L667.6 250.7M667.6 250.7L665.9 240.5M673.5 210.2L666.1 216.0M631.2 189.6L625.8 193.3M634.3 205.6L637.8 215.6M623.4 206.8L623.2 199.2M620.9 190.2L623.2 199.2M699.0 258.6L691.9 253.0M650.5 227.3L648.0 222.4M623.4 206.8L631.0 215.5M680.0 213.5L673.5 210.2M674.8 247.1L681.9 253.0M684.9 238.3L686.7 231.7M634.3 205.6L641.2 211.0M637.8 215.6L629.3 209.1M663.5 276.0L675.3 264.7M672.4 220.2L666.1 216.0M693.2 234.0L696.2 240.9M685.0 243.9L693.2 247.5M648.8 207.3L646.5 212.5M673.5 210.2L667.0 207.0M652.1 215.2L648.0 222.4M619.2 172.2L611.2 177.0M700.5 247.0L696.2 240.9M687.0 261.0L688.9 271.6M674.3 302.0L692.4 306.7M683.0 323.8L689.5 330.2M658.0 264.1L664.2 259.2M698.0 219.0L693.0 218.0M693.2 247.5L690.3 239.1M633.0 183.0L625.8 187.4M623.4 206.8L628.3 203.5M652.1 215.2L648.8 207.3M631.0 215.5L636.4 223.1M696.2 240.9L690.3 239.1M644.0 217.6L652.1 215.2M689.6 224.5L698.7 226.6M693.2 234.0L698.7 226.6M602.9 183.0L609.3 190.6M678.6 234.1L676.4 224.7M663.2 228.5L667.4 223.3M663.5 276.0L667.1 284.7M686.5 215.8L681.6 220.7M655.7 199.0L645.3 201.7M661.3 203.0L660.8 212.8M667.0 207.0L661.3 203.0M618.8 185.1L620.9 190.2M641.8 230.7L647.2 241.5M623.4 206.8L629.3 209.1M674.3 302.0L694.7 291.8M683.0 323.8L691.5 314.4M674.8 247.1L674.3 255.2M628.3 203.5L623.2 199.2M693.0 218.0L686.5 215.8M633.0 183.0L628.4 179.4M696.6 277.2L688.9 271.6M644.0 217.6L646.5 212.5M660.8 212.8L652.1 215.2M612.9 186.4L615.1 192.2M628.3 203.5L635.0 200.1M660.8 212.8L661.1 219.7M614.6 168.6L611.2 177.0M666.1 216.0L667.4 223.3M663.2 228.5L667.3 234.6M682.9 227.2L686.7 231.7M655.7 199.0L650.0 195.0M703.0 220.0L698.7 226.6M678.6 312.9L692.4 306.7M652.6 252.3L659.4 244.8M675.3 264.7L681.9 253.0M686.5 215.8L680.0 213.5M656.0 223.3L648.0 222.4M667.1 284.7L670.7 293.3M665.9 240.5L667.3 234.6M661.1 219.7L667.4 223.3M623.8 175.8L617.1 179.1M650.0 195.0L640.3 198.5M607.6 171.0L611.2 177.0M631.0 215.5L637.8 215.6M661.3 203.0L655.4 207.2M618.8 185.1L615.1 192.2" fill="none" stroke="#959595" stroke-width="1.05"/></g>
<rect x="818.5" y="94" width="24.5" height="329" fill="#000"/>
<rect x="819.5" y="95" width="22.5" height="2.5" fill="#f2c8c0"/>
<rect x="819.5" y="97.5" width="22.5" height="322" fill="url(#cb)"/>
<text x="830.5" y="81.8" font-size="15" text-anchor="middle" fill="#222">dx</text>
<text x="851.3" y="100.2" font-size="9.1" fill="#111" stroke="#111" stroke-width="0.2">9.450</text>
<text x="851.3" y="132.4" font-size="9.1" fill="#111" stroke="#111" stroke-width="0.2">8.425</text>
<text x="851.3" y="164.6" font-size="9.1" fill="#111" stroke="#111" stroke-width="0.2">7.400</text>
<text x="851.3" y="196.8" font-size="9.1" fill="#111" stroke="#111" stroke-width="0.2">6.375</text>
<text x="851.3" y="229.0" font-size="9.1" fill="#111" stroke="#111" stroke-width="0.2">5.350</text>
<text x="851.3" y="261.2" font-size="9.1" fill="#111" stroke="#111" stroke-width="0.2">4.325</text>
<text x="851.3" y="293.4" font-size="9.1" fill="#111" stroke="#111" stroke-width="0.2">3.300</text>
<text x="851.3" y="325.6" font-size="9.1" fill="#111" stroke="#111" stroke-width="0.2">2.275</text>
<text x="851.3" y="357.8" font-size="9.1" fill="#111" stroke="#111" stroke-width="0.2">1.250</text>
<text x="851.3" y="390.0" font-size="9.1" fill="#111" stroke="#111" stroke-width="0.2">0.2250</text>
<text x="851.3" y="422.2" font-size="9.1" fill="#111" stroke="#111" stroke-width="0.2">-0.8000</text>
<path d="M843 97.5h5M843 129.7h5M843 161.9h5M843 194.1h5M843 226.3h5M843 258.5h5M843 290.7h5M843 322.9h5M843 355.1h5M843 387.3h5M843 419.5h5" stroke="#111" stroke-width="1.1" fill="none"/>
</svg>

<div class="a" style="left:178px;top:295px;width:223px;height:270px;background:#f3f3f3;border:1px solid #9a9a9a;border-left-color:#c8c8d0;border-top-color:#c8c8c8;box-sizing:border-box;box-shadow:1px 1px 2px rgba(0,0,0,.25)"></div>
<div class="a" style="left:181px;top:541px;width:216px;height:21px;background:linear-gradient(#eef5fd,#d6e7fa);border:1px solid #a9cdf5;border-radius:3px;box-sizing:border-box"></div>
<div class="mi" style="top:303px;font-size:12px;letter-spacing:0;transform:scaleX(0.937);transform-origin:0 0">3D Color Fill Surface</div>
<div class="mi" style="top:325px;font-size:12px;letter-spacing:0;transform:scaleX(0.942);transform-origin:0 0">3D X Constant with Base</div>
<div class="mi" style="top:347px;font-size:12px;letter-spacing:0;transform:scaleX(0.938);transform-origin:0 0">3D Y Constant with Base</div>
<div class="mi" style="top:369px;font-size:12px;letter-spacing:0;transform:scaleX(0.932);transform-origin:0 0">3D Colormap Surface</div>
<div class="mi dis" style="top:391px;font-size:12px;letter-spacing:0;transform:scaleX(0.951);transform-origin:0 0">3D Color Fill Surface with Error Bar</div>
<div class="mi dis" style="top:413px;font-size:12px;letter-spacing:0;transform:scaleX(0.948);transform-origin:0 0">3D Colormap Surface with Error Bar</div>
<div class="mi dis" style="top:435px;font-size:12px;letter-spacing:0;transform:scaleX(0.965);transform-origin:0 0">Multiple Color Fill Surfaces</div>
<div class="mi dis" style="top:457px;font-size:12px;letter-spacing:0;transform:scaleX(0.961);transform-origin:0 0">Multiple Colormap Surfaces</div>
<div class="mi" style="top:479px;font-size:12px;letter-spacing:0;transform:scaleX(0.955);transform-origin:0 0">3D Colormap Surface with Projection</div>
<div class="mi" style="top:501px;font-size:12px;letter-spacing:0;transform:scaleX(0.918);transform-origin:0 0">3D Wire Frame</div>
<div class="mi" style="top:523px;font-size:12px;letter-spacing:0;transform:scaleX(0.924);transform-origin:0 0">3D Wire Surface</div>
<div class="mi" style="top:545px;font-size:12px;letter-spacing:0;transform:scaleX(0.921);transform-origin:0 0">3D Ternary Colormap Surface</div>
<svg class="a" style="left:184px;top:302px" width="18" height="18" viewBox="0 0 18 18"><polygon points="6.800,1.100 16,1.100 16,9.400 10.100,15.600 1.300,15.600 1.300,6" fill="#fff"/><polygon points="2.500,12.600 2.500,7.400 7.600,3.300 15,3.300 15,6.600 9.500,12.600" fill="#1414d2"/><polygon points="6.800,1.100 16,1.100 16,9.400 10.100,15.600 1.300,15.600 1.300,6" fill="none" stroke="#000" stroke-width="1.250" stroke-linejoin="round"/></svg>
<svg class="a" style="left:184px;top:324px" width="18" height="18" viewBox="0 0 18 18"><polygon points="1.300,15.600 10.100,15.600 14,12 14,17.500 2,17.500" fill="#aab0e6"/><polygon points="6.800,1.100 16,1.100 16,9.400 10.100,15.600 1.300,15.600 1.300,6" fill="#fff"/><path d="M3 13.500V8.500L8.500 3M6 13.500V8.500L11.500 3M9 13.500V8.500L14.500 3" stroke="#1a1ad2" stroke-width="1.700" fill="none"/><polygon points="6.800,1.100 16,1.100 16,9.400 10.100,15.600 1.300,15.600 1.300,6" fill="none" stroke="#000" stroke-width="1.250" stroke-linejoin="round"/></svg>
<svg class="a" style="left:184px;top:346px" width="18" height="18" viewBox="0 0 18 18"><polygon points="1.300,15.600 10.100,15.600 14,12 14,17.500 2,17.500" fill="#aab0e6"/><polygon points="6.800,1.100 16,1.100 16,9.400 10.100,15.600 1.300,15.600 1.300,6" fill="#fff"/><path d="M6.500 4.500H15M4.500 7.500H15M2.500 10.500H12M2 13.500H9.500" stroke="#1a1ad2" stroke-width="1.800" fill="none"/><polygon points="6.800,1.100 16,1.100 16,9.400 10.100,15.600 1.300,15.600 1.300,6" fill="none" stroke="#000" stroke-width="1.250" stroke-linejoin="round"/></svg>
<svg class="a" style="left:184px;top:368px" width="18" height="18" viewBox="0 0 18 18"><polygon points="6.800,1.100 16,1.100 16,9.400 10.100,15.600 1.300,15.600 1.300,6" fill="#fff"/><polygon points="2.500,12.600 2.500,7.400 7.600,3.300 15,3.300 15,6.600 9.500,12.600" fill="#30cc30"/><polygon points="2.500,12.600 2.500,10 9.500,10 15,5 15,6.600 9.500,12.600" fill="#18b8d8"/><polygon points="3.500,8.500 7.600,4.500 12,4.500 9,8.500" fill="#f2e81e"/><polygon points="6,5.500 7.600,3.300 10,3.300 9,5.500" fill="#e01a1a"/><path d="M2.500 13.600H9.500" stroke="#1a1ad2" stroke-width="1.200"/><polygon points="6.800,1.100 16,1.100 16,9.400 10.100,15.600 1.300,15.600 1.300,6" fill="none" stroke="#000" stroke-width="1.250" stroke-linejoin="round"/></svg>
<svg class="a" style="left:184px;top:390px" width="18" height="18" viewBox="0 0 18 18"><polygon points="6.800,1.100 16,1.100 16,9.400 10.100,15.600 1.300,15.600 1.300,6" fill="#fff"/><polygon points="2.500,12.600 2.500,7.400 7.600,3.300 15,3.300 15,6.600 9.500,12.600" fill="#a2a6b6"/><path d="M7.600 3.300V8L2.500 12.600M7.600 8H15" stroke="#c8cad4" stroke-width=".8" fill="none"/><polygon points="6.800,1.100 16,1.100 16,9.400 10.100,15.600 1.300,15.600 1.300,6" fill="none" stroke="#707070" stroke-width="1.250" stroke-linejoin="round"/></svg>
<svg class="a" style="left:184px;top:412px" width="18" height="18" viewBox="0 0 18 18"><polygon points="6.800,1.100 16,1.100 16,9.400 10.100,15.600 1.300,15.600 1.300,6" fill="#fff"/><polygon points="2.500,12.600 2.500,7.400 7.600,3.300 15,3.300 15,6.600 9.500,12.600" fill="#a2a6b6"/><path d="M7.600 3.300V8L2.500 12.600M7.600 8H15" stroke="#c8cad4" stroke-width=".8" fill="none"/><polygon points="6.800,1.100 16,1.100 16,9.400 10.100,15.600 1.300,15.600 1.300,6" fill="none" stroke="#707070" stroke-width="1.250" stroke-linejoin="round"/></svg>
<svg class="a" style="left:184px;top:434px" width="18" height="18" viewBox="0 0 18 18"><polygon points="6.800,1.100 16,1.100 16,9.400 10.100,15.600 1.300,15.600 1.300,6" fill="#fff"/><polygon points="2.500,12.600 2.500,7.400 7.600,3.300 15,3.300 15,6.600 9.500,12.600" fill="#a2a6b6"/><path d="M7.600 3.300V8L2.500 12.600M7.600 8H15" stroke="#c8cad4" stroke-width=".8" fill="none"/><polygon points="6.800,1.100 16,1.100 16,9.400 10.100,15.600 1.300,15.600 1.300,6" fill="none" stroke="#707070" stroke-width="1.250" stroke-linejoin="round"/></svg>
<svg class="a" style="left:184px;top:456px" width="18" height="18" viewBox="0 0 18 18"><polygon points="6.800,1.100 16,1.100 16,9.400 10.100,15.600 1.300,15.600 1.300,6" fill="#fff"/><polygon points="2.500,12.600 2.500,7.400 7.600,3.300 15,3.300 15,6.600 9.500,12.600" fill="#a2a6b6"/><path d="M7.600 3.300V8L2.500 12.600M7.600 8H15" stroke="#c8cad4" stroke-width=".8" fill="none"/><polygon points="6.800,1.100 16,1.100 16,9.400 10.100,15.600 1.300,15.600 1.300,6" fill="none" stroke="#707070" stroke-width="1.250" stroke-linejoin="round"/></svg>
<svg class="a" style="left:184px;top:478px" width="18" height="18" viewBox="0 0 18 18"><polygon points="6.800,1.100 16,1.100 16,9.400 10.100,15.600 1.300,15.600 1.300,6" fill="#fff"/><polygon points="2.500,8.500 2.500,6.400 7.600,2.600 15,2.600 15,5 9.500,8.500" fill="#30cc30"/><polygon points="5,5.500 7.600,2.600 11,2.600 9.500,5.500" fill="#f2e81e"/><polygon points="6.500,3.800 7.600,2.600 9.500,2.600 9,3.800" fill="#e01a1a"/><path d="M2 9.600H10L15.500 5.500" stroke="#000" stroke-width="1.400" fill="none"/><polygon points="2.500,14.600 2.500,11.500 9.800,11.500 14.800,7.500 14.800,10 9.500,14.600" fill="#30cc30"/><polygon points="4,13 8,13 11,11 5,11.500" fill="#f2e81e"/><polygon points="6.800,1.100 16,1.100 16,9.400 10.100,15.600 1.300,15.600 1.300,6" fill="none" stroke="#000" stroke-width="1.250" stroke-linejoin="round"/></svg>
<svg class="a" style="left:184px;top:500px" width="18" height="18" viewBox="0 0 18 18"><polygon points="6.800,1.100 16,1.100 16,9.400 10.100,15.600 1.300,15.600 1.300,6" fill="#fff"/><path d="M4 4.500H16M1.300 9.500H12.500M1.300 12.500H10.100M10.100 15.600V9.500L16 4.500M6 15.600V9.500L11.500 4.500M6.800 1.100V5.500L1.300 10" stroke="#1a22c8" stroke-width="1.100" fill="none"/><polygon points="6.800,1.100 16,1.100 16,9.400 10.100,15.600 1.300,15.600 1.300,6" fill="none" stroke="#000" stroke-width="1.250" stroke-linejoin="round"/></svg>
<svg class="a" style="left:184px;top:522px" width="18" height="18" viewBox="0 0 18 18"><polygon points="6.800,1.100 16,1.100 16,9.400 10.100,15.600 1.300,15.600 1.300,6" fill="#fff"/><polygon points="2.500,12.600 2.500,7.400 7.600,3.300 15,3.300 15,6.600 9.500,12.600" fill="#2a7ade"/><path d="M4 4.500H16M1.300 9.500H12.500M1.300 12.500H10.100M10.100 15.600V9.500L16 4.500M6 15.600V9.500L11.500 4.500" stroke="#1a22b8" stroke-width="1.100" fill="none"/><polygon points="6.800,1.100 16,1.100 16,9.400 10.100,15.600 1.300,15.600 1.300,6" fill="none" stroke="#000" stroke-width="1.250" stroke-linejoin="round"/></svg>
<svg class="a" style="left:184px;top:543px" width="18" height="18" viewBox="0 0 18 18"><path d="M9 1.200L16.800 9V16H1.200V9Z" fill="#fff" stroke="#000" stroke-width="1" stroke-linejoin="round"/><path d="M1.200 16L7 11M16.800 16L11 11" stroke="#000" stroke-width="0.900"/><path d="M4.500 9C5.500 4 8 2.500 9 2.500C10 2.500 12.500 4 13.500 9C12 12 6 12 4.500 9Z" fill="#46cc4a"/><path d="M6.500 5C8 3 10 3 11.500 5C10.500 6.500 7.500 6.500 6.500 5Z" fill="#b4e848"/><path d="M4.200 9.500C6.500 8.200 11.500 8.200 13.800 9.500C13 13.500 5 13.500 4.200 9.500Z" fill="#2424c4"/><path d="M4.500 11C6 13.500 8 12.500 9 13.500C10 12.500 12 13.500 13.500 11" stroke="#3a1060" stroke-width="1.300" fill="none"/></svg>
<div class="a" style="left:175px;top:537.5px;width:188px;height:28px;border:3px solid #d8443f;box-sizing:border-box"></div>

<div class="a" style="left:0;top:566px;width:989px;height:35px;background:linear-gradient(#e9eaf2 0,#dfe1ec 70%,#f0f0f5 88%,#f2f2f6 100%)"></div>
<div class="a" style="left:0px;top:568px;width:130px;height:26px;border-radius:0 7px 7px 0;background:linear-gradient(#fbfbfd 0,#eeeff6 40%,#d2d4e4 100%)"></div>
<div class="a" style="left:120px;top:568px;width:10px;height:26px;border-radius:0 7px 7px 0;background:linear-gradient(#d9dbea 0,#c3c6da 60%,#a9adc8 100%)"></div>
<svg class="a" style="left:121px;top:583px" width="8" height="9" viewBox="0 0 8 9"><path d="M1 1.5H7" stroke="#000" stroke-width="1.4"/><path d="M1 4.5H7L4 8Z" fill="#000"/></svg>
<div class="a" style="left:131px;top:568px;width:207px;height:26px;border-radius:0 7px 7px 0;background:linear-gradient(#fbfbfd 0,#eeeff6 40%,#d2d4e4 100%)"></div>
<div class="a" style="left:328px;top:568px;width:10px;height:26px;border-radius:0 7px 7px 0;background:linear-gradient(#d9dbea 0,#c3c6da 60%,#a9adc8 100%)"></div>
<svg class="a" style="left:329px;top:583px" width="8" height="9" viewBox="0 0 8 9"><path d="M1 1.5H7" stroke="#000" stroke-width="1.4"/><path d="M1 4.5H7L4 8Z" fill="#000"/></svg>
<div class="a" style="left:339px;top:568px;width:170px;height:26px;border-radius:0 7px 7px 0;background:linear-gradient(#fbfbfd 0,#eeeff6 40%,#d2d4e4 100%)"></div>
<div class="a" style="left:499px;top:568px;width:10px;height:26px;border-radius:0 7px 7px 0;background:linear-gradient(#d9dbea 0,#c3c6da 60%,#a9adc8 100%)"></div>
<svg class="a" style="left:500px;top:583px" width="8" height="9" viewBox="0 0 8 9"><path d="M1 1.5H7" stroke="#000" stroke-width="1.4"/><path d="M1 4.5H7L4 8Z" fill="#000"/></svg>
<div class="a" style="left:510px;top:568px;width:250px;height:26px;border-radius:0 7px 7px 0;background:linear-gradient(#fbfbfd 0,#eeeff6 40%,#d2d4e4 100%)"></div>
<div class="a" style="left:750px;top:568px;width:10px;height:26px;border-radius:0 7px 7px 0;background:linear-gradient(#d9dbea 0,#c3c6da 60%,#a9adc8 100%)"></div>
<svg class="a" style="left:751px;top:583px" width="8" height="9" viewBox="0 0 8 9"><path d="M1 1.5H7" stroke="#000" stroke-width="1.4"/><path d="M1 4.5H7L4 8Z" fill="#000"/></svg>
<svg class="a" style="left:135px;top:571px" width="4" height="20" viewBox="0 0 4 20"><path d="M1.5 1V19" stroke="#8a8ea8" stroke-width="2" stroke-dasharray="2 2"/><path d="M2.5 2V20" stroke="#fff" stroke-width="1" stroke-dasharray="2 2"/></svg>
<svg class="a" style="left:342px;top:571px" width="4" height="20" viewBox="0 0 4 20"><path d="M1.5 1V19" stroke="#8a8ea8" stroke-width="2" stroke-dasharray="2 2"/><path d="M2.5 2V20" stroke="#fff" stroke-width="1" stroke-dasharray="2 2"/></svg>
<svg class="a" style="left:514px;top:571px" width="4" height="20" viewBox="0 0 4 20"><path d="M1.5 1V19" stroke="#8a8ea8" stroke-width="2" stroke-dasharray="2 2"/><path d="M2.5 2V20" stroke="#fff" stroke-width="1" stroke-dasharray="2 2"/></svg>
<svg class="a" style="left:4px;top:574px" width="18" height="17" viewBox="0 0 18 17"><path d="M1 3L6 9L10 4L14 8L17 3V16H1Z" fill="#18b030"/><path d="M1 3L7 12L11 8L17 14V16H1Z" fill="#e01818"/><path d="M1 13L5 15L9 11L13 14L17 8V16H1Z" fill="#111"/></svg>
<svg class="a" style="left:25.4px;top:579px" width="5.600" height="3.600" viewBox="0 0 7 4.500"><path d="M0 0.300H7L3.500 4.500Z" fill="#111"/></svg>
<svg class="a" style="left:35px;top:572px" width="18" height="18" viewBox="0 0 18 18"><circle cx="10.5" cy="9" r="6.3" fill="#fff" stroke="#111" stroke-width="1.2"/><path d="M2.5 1V17" stroke="#111" stroke-width="1.2"/><path d="M0 2.5H2.5M0 5.5H2.5M0 8.5H2.5M0 11.500H2.500M0 14.500H2.500" stroke="#111" stroke-width="1"/><text x="10.500" y="12.500" font-size="10" text-anchor="middle" font-family="'Liberation Sans',sans-serif" fill="#111">r</text></svg>
<svg class="a" style="left:57.4px;top:579px" width="5.600" height="3.600" viewBox="0 0 7 4.500"><path d="M0 0.300H7L3.500 4.500Z" fill="#111"/></svg>
<svg class="a" style="left:67px;top:571px" width="18" height="20" viewBox="0 0 18 20"><path d="M4.500 1V18" stroke="#111" stroke-width="1.2"/><rect x="2" y="5" width="5" height="8" fill="#fff" stroke="#111" stroke-width="1.2"/><path d="M12.500 2V19" stroke="#e01818" stroke-width="1.4"/><rect x="10" y="6" width="5" height="9" fill="#e01818"/></svg>
<svg class="a" style="left:88.4px;top:579px" width="5.600" height="3.600" viewBox="0 0 7 4.500"><path d="M0 0.300H7L3.500 4.500Z" fill="#111"/></svg>
<svg class="a" style="left:99px;top:573px" width="17" height="17" viewBox="0 0 17 17"><path d="M4 1H16V12H4Z" fill="#f8e060" stroke="#7a6410" stroke-width="1"/><path d="M1 4H12V15H1Z" fill="#fbe878" stroke="#7a6410" stroke-width="1"/><path d="M3.500 7V12H9.500V7M6.500 9V12" stroke="#7a5a10" stroke-width="1.1" fill="none"/></svg>
<svg class="a" style="left:142px;top:572px" width="18" height="19" viewBox="0 0 18 19"><path d="M1 8L6 2H17V12L12 18H1Z" fill="#fff" stroke="#111" stroke-width="1.2" stroke-linejoin="round"/><path d="M1 8H12V18M12 8L17 2" stroke="#111" stroke-width="1" fill="none"/><rect x="4" y="9" width="2.500" height="8" fill="#2030d0"/><rect x="7.500" y="6" width="2.500" height="11" fill="#4060e8"/><rect x="11" y="4" width="2" height="9" fill="#2030d0"/></svg>
<svg class="a" style="left:164.4px;top:579px" width="5.600" height="3.600" viewBox="0 0 7 4.500"><path d="M0 0.300H7L3.500 4.500Z" fill="#111"/></svg>
<svg class="a" style="left:182px;top:572px" width="18" height="18" viewBox="0 0 18 18"><path d="M9 1.200L16.800 9V16H1.200V9Z" fill="#fff" stroke="#000" stroke-width="1" stroke-linejoin="round"/><path d="M1.200 16L7 11M16.800 16L11 11" stroke="#000" stroke-width="0.900"/><path d="M4.500 9C5.500 4 8 2.500 9 2.500C10 2.500 12.500 4 13.500 9C12 12 6 12 4.500 9Z" fill="#46cc4a"/><path d="M6.500 5C8 3 10 3 11.500 5C10.500 6.500 7.500 6.500 6.500 5Z" fill="#b4e848"/><path d="M4.200 9.500C6.500 8.200 11.500 8.200 13.800 9.500C13 13.500 5 13.500 4.200 9.500Z" fill="#2424c4"/><path d="M4.500 11C6 13.500 8 12.500 9 13.500C10 12.500 12 13.500 13.500 11" stroke="#3a1060" stroke-width="1.300" fill="none"/></svg>
<svg class="a" style="left:202.4px;top:579px" width="5.600" height="3.600" viewBox="0 0 7 4.500"><path d="M0 0.300H7L3.500 4.500Z" fill="#111"/></svg>
<div class="a" style="left:170px;top:564.5px;width:38px;height:32px;border:3px solid #d8443f;box-sizing:border-box"></div>
<svg class="a" style="left:212px;top:572px" width="18" height="19" viewBox="0 0 18 19"><path d="M1 7L6 2H17V12L12 18H1Z" fill="#fff" stroke="#111" stroke-width="1.2" stroke-linejoin="round"/><path d="M1 7H12V18M12 7L17 2" stroke="#111" stroke-width="1" fill="none"/><circle cx="4.500" cy="14" r="1.500" fill="#111"/><circle cx="8.500" cy="10.500" r="1.500" fill="#111"/><circle cx="14.500" cy="6" r="1.400" fill="#111"/><circle cx="9" cy="4.500" r="1.300" fill="#111"/></svg>
<svg class="a" style="left:233.4px;top:579px" width="5.600" height="3.600" viewBox="0 0 7 4.500"><path d="M0 0.300H7L3.500 4.500Z" fill="#111"/></svg>
<svg class="a" style="left:243px;top:573px" width="18" height="17" viewBox="0 0 18 17"><rect x="0.500" y="0.500" width="17" height="16" fill="#28c028" stroke="#106010" stroke-width="1"/><circle cx="5" cy="5" r="2.600" fill="#f0e020" stroke="#c02020" stroke-width=".8"/><circle cx="13" cy="5" r="2.600" fill="#f0e020" stroke="#c02020" stroke-width=".8"/><circle cx="5" cy="12" r="2.600" fill="#f0e020" stroke="#c02020" stroke-width=".8"/><circle cx="13" cy="12" r="2.600" fill="#f0e020" stroke="#c02020" stroke-width=".8"/><circle cx="9" cy="8.500" r="1.500" fill="#2040d0"/></svg>
<svg class="a" style="left:264.4px;top:579px" width="5.600" height="3.600" viewBox="0 0 7 4.500"><path d="M0 0.300H7L3.500 4.500Z" fill="#111"/></svg>
<svg class="a" style="left:274px;top:571px" width="18" height="20" viewBox="0 0 18 20"><path d="M1 7L4 2L7 6L10 1L13 6L17 2" stroke="#c02020" stroke-width="1.200" fill="none"/><rect x="0.500" y="8.500" width="17" height="11" fill="#28c028" stroke="#106010" stroke-width="1"/><circle cx="5" cy="14" r="2.400" fill="#f0e020" stroke="#c02020" stroke-width=".8"/><circle cx="13" cy="14" r="2.400" fill="#f0e020" stroke="#c02020" stroke-width=".8"/><path d="M0 11H18" stroke="#1828c0" stroke-width="1.200"/></svg>
<svg class="a" style="left:295.4px;top:579px" width="5.600" height="3.600" viewBox="0 0 7 4.500"><path d="M0 0.300H7L3.500 4.500Z" fill="#111"/></svg>
<div class="a" style="left:307px;top:574px;width:15px;height:15px;background:linear-gradient(135deg,#b8bac4,#9a9caa);border:1px solid #8a8c9a;box-sizing:border-box"></div>
<svg class="a" style="left:352px;top:572px" width="16" height="18" viewBox="0 0 16 18"><path d="M1.500 1.500L4 3.500H12L14.500 1.500V9C14.500 12 11 13.500 8 13.500C5 13.500 1.500 12 1.500 9Z" fill="#fff" stroke="#111" stroke-width="1.200"/><circle cx="5.500" cy="7" r="1.100" fill="#111"/><circle cx="10.500" cy="7" r="1.100" fill="#111"/><path d="M5 10C7 11.500 9 11.500 11 10" stroke="#111" stroke-width="1" fill="none"/><path d="M1 15H4V18H1ZM6.500 15H9.500V18H6.500ZM12 15H15V18H12Z" fill="#e01818"/></svg>
<svg class="a" style="left:373px;top:572px" width="16" height="18" viewBox="0 0 16 18"><path d="M1.500 1.500L4 3.500H12L14.500 1.500V9C14.500 12 11 13.500 8 13.500C5 13.500 1.500 12 1.500 9Z" fill="#e4e4ea" stroke="#8c8c98" stroke-width="1.200"/><path d="M5 6L11 11M11 6L5 11" stroke="#a0a0ac" stroke-width="1"/><path d="M1 15H4V18H1ZM6.500 15H9.500V18H6.500ZM12 15H15V18H12Z" fill="#a4a4b0"/></svg>
<div class="a" style="left:396px;top:571px;width:1px;height:20px;background:#b8bacc"></div>
<svg class="a" style="left:404px;top:572px" width="15" height="17" viewBox="0 0 15 17"><path d="M1 1H14V8C14 13 10.500 16 7.500 16C4.500 16 1 13 1 8Z" fill="#d4d6e0" stroke="#7a7c8c" stroke-width="1.200"/><path d="M7.500 1V16" stroke="#9a9cac" stroke-width="1"/><circle cx="5" cy="6.500" r="1.200" fill="#555868"/><circle cx="10" cy="6.500" r="1.200" fill="#555868"/><path d="M4.500 11C6.500 12.500 8.500 12.500 10.500 11" stroke="#555868" stroke-width="1" fill="none"/></svg>
<svg class="a" style="left:426px;top:572px" width="18" height="18" viewBox="0 0 18 18"><rect x="0" y="4" width="3" height="3" fill="#9c9eae"/><rect x="4" y="4" width="3" height="3" fill="#b4b6c4"/><rect x="8" y="4" width="3" height="3" fill="#9c9eae"/><rect x="0" y="8" width="3" height="3" fill="#b4b6c4"/><rect x="4" y="8" width="3" height="3" fill="#9c9eae"/><rect x="8" y="8" width="3" height="3" fill="#b4b6c4"/><rect x="0" y="12" width="3" height="3" fill="#9c9eae"/><rect x="4" y="12" width="3" height="3" fill="#b4b6c4"/><rect x="8" y="12" width="3" height="3" fill="#9c9eae"/><path d="M15 2V16" stroke="#7c7e8e" stroke-width="1.300"/><path d="M12.500 4.500L15 1.500L17.500 4.500ZM12.500 13.500L15 16.500L17.500 13.500Z" fill="#7c7e8e"/></svg>
<svg class="a" style="left:449px;top:572px" width="18" height="18" viewBox="0 0 18 18"><rect x="0" y="4" width="3" height="3" fill="#9c9eae"/><rect x="4" y="4" width="3" height="3" fill="#b4b6c4"/><rect x="8" y="4" width="3" height="3" fill="#9c9eae"/><rect x="0" y="8" width="3" height="3" fill="#b4b6c4"/><rect x="4" y="8" width="3" height="3" fill="#9c9eae"/><rect x="8" y="8" width="3" height="3" fill="#b4b6c4"/><rect x="0" y="12" width="3" height="3" fill="#9c9eae"/><rect x="4" y="12" width="3" height="3" fill="#b4b6c4"/><rect x="8" y="12" width="3" height="3" fill="#9c9eae"/><path d="M15 2V16" stroke="#7c7e8e" stroke-width="1.300"/><path d="M12.500 4.500L15 1.500L17.500 4.500ZM12.500 13.500L15 16.500L17.500 13.500Z" fill="#7c7e8e"/></svg>
<div class="a" style="left:472px;top:571px;width:1px;height:20px;background:#b8bacc"></div>
<svg class="a" style="left:478px;top:572px" width="18" height="18" viewBox="0 0 18 18"><rect x="0" y="4" width="3" height="3" fill="#111"/><rect x="4" y="4" width="3" height="3" fill="#111"/><rect x="8" y="4" width="3" height="3" fill="#111"/><rect x="0" y="8" width="3" height="3" fill="#111"/><rect x="4" y="8" width="3" height="3" fill="#e01818"/><rect x="8" y="8" width="3" height="3" fill="#111"/><rect x="0" y="12" width="3" height="3" fill="#111"/><rect x="4" y="12" width="3" height="3" fill="#111"/><rect x="8" y="12" width="3" height="3" fill="#111"/><path d="M15 2V16" stroke="#111" stroke-width="1.300"/><path d="M12.500 4.500L15 1.500L17.500 4.500ZM12.500 13.500L15 16.500L17.500 13.500Z" fill="#111"/></svg>
<svg class="a" style="left:524px;top:571px" width="18" height="20" viewBox="0 0 18 20"><rect x="2" y="3" width="7" height="13" fill="#8f93ab" stroke="#6f7390" stroke-width="1"/><path d="M11 6C15 7 15 12 11 13" stroke="#8f93ab" stroke-width="1.800" fill="none"/></svg>
<svg class="a" style="left:545px;top:571px" width="18" height="20" viewBox="0 0 18 20"><rect x="8" y="3" width="7" height="13" fill="#8f93ab" stroke="#6f7390" stroke-width="1"/><path d="M6 6C2 7 2 12 6 13" stroke="#8f93ab" stroke-width="1.800" fill="none"/></svg>
<svg class="a" style="left:566px;top:571px" width="18" height="20" viewBox="0 0 18 20"><polygon points="1,4 7,2 11,15 5,17" fill="#8f93ab" stroke="#6f7390" stroke-width="1"/><path d="M17 7H11M13.500 4L10.500 7L13.500 10" stroke="#8f93ab" stroke-width="1.800" fill="none"/></svg>
<svg class="a" style="left:588px;top:571px" width="18" height="20" viewBox="0 0 18 20"><polygon points="11,2 17,4 13,17 7,15" fill="#8f93ab" stroke="#6f7390" stroke-width="1"/><path d="M0 7H6M3.500 4L6.500 7L3.500 10" stroke="#8f93ab" stroke-width="1.800" fill="none"/></svg>
<svg class="a" style="left:610px;top:571px" width="18" height="20" viewBox="0 0 18 20"><polygon points="5,5 12,5 15,14 2,14" fill="#8f93ab" stroke="#6f7390" stroke-width="1"/><rect x="1" y="14" width="15" height="3" fill="#8f93ab" stroke="#6f7390" stroke-width="1"/><rect x="7.500" y="2" width="2" height="3" fill="#6f7390"/></svg>
<svg class="a" style="left:632px;top:571px" width="18" height="20" viewBox="0 0 18 20"><polygon points="1,3 16,3 12,15 5,15" fill="#8f93ab" stroke="#6f7390" stroke-width="1"/><rect x="1" y="2" width="15" height="2.500" fill="#6f7390"/></svg>
<svg class="a" style="left:655px;top:571px" width="18" height="20" viewBox="0 0 18 20"><polygon points="6,3 11,3 15,11 2,11" fill="#e8e9f0" stroke="#6f7390" stroke-width="1"/><rect x="6" y="2" width="5" height="3" fill="#8f93ab"/><rect x="1" y="11" width="15" height="6" fill="#8f93ab" stroke="#6f7390" stroke-width="1"/></svg>
<svg class="a" style="left:677px;top:571px" width="18" height="20" viewBox="0 0 18 20"><rect x="1" y="8" width="9" height="9" fill="#8f93ab" stroke="#6f7390" stroke-width="1"/><rect x="7" y="3" width="9" height="9" fill="#8f93ab" stroke="#6f7390" stroke-width="1"/></svg>

<div class="a" style="left:688px;top:509px;width:296px;height:87px;background:#fff"></div>
<svg class="a" style="left:0;top:0" width="989" height="601" viewBox="0 0 989 601">
<g fill="#e0261c"><rect x="688" y="509" width="9.600" height="87"/><rect x="688" y="509" width="89.400" height="9.500"/><polygon points="715,518 725.400,518 733.400,540.300 742.500,518 752.400,518 739.600,550.500 726.200,550.500"/><rect x="727.900" y="548" width="10.900" height="48"/><rect x="767.400" y="509" width="10" height="87"/><rect x="777" y="540.300" width="28" height="10.700"/><rect x="804.300" y="509" width="9.400" height="87"/></g>
<rect x="688" y="551.600" width="126" height="1.600" fill="#fff"/>
<rect x="830" y="550.500" width="152.500" height="2.200" fill="#d8443f"/>
<text x="829" y="540" font-family="'Liberation Sans','Noto Sans CJK SC',sans-serif" font-weight="400" font-size="29" fill="#303030" letter-spacing="2.700">中国煤化工</text>
<text x="838.500 870.300 906.700 943 975.500" y="585.300" font-family="'Liberation Sans',sans-serif" font-size="31.500" fill="#6a6a6a" text-anchor="middle">CNMHG</text>
</svg>

<svg class="a" style="left:0;top:0" width="989" height="601" viewBox="0 0 989 601">
<clipPath id="cpw"><rect x="570" y="520" width="118" height="60"/></clipPath>
<g clip-path="url(#cpw)"><g fill="#8e8e8e" opacity=".55" transform="translate(1.200,1.200)"><ellipse cx="598.300" cy="547.200" rx="16" ry="15.200"/><ellipse cx="614.700" cy="557.800" rx="13.800" ry="12.500"/></g><path d="M590 560L587 564.500L594.500 561.500Z" fill="#f6f6f6"/><ellipse cx="598.300" cy="547.200" rx="16" ry="15.200" fill="#f6f6f6"/><ellipse cx="614.700" cy="557.800" rx="14.600" ry="13.300" fill="#a6a6a6"/><ellipse cx="614.700" cy="557.800" rx="13.500" ry="12.200" fill="#f7f7f7"/><path d="M620 568L625.500 572.500L624 566.500Z" fill="#f7f7f7"/><circle cx="592.600" cy="541.700" r="2" fill="#9a9a9a"/><circle cx="605.800" cy="541.700" r="2" fill="#9a9a9a"/><circle cx="610" cy="553.500" r="1.600" fill="#a2a2a2"/><circle cx="620" cy="553.500" r="1.600" fill="#a2a2a2"/><text x="637" y="563.500" font-family="'Liberation Sans','Noto Sans CJK SC',sans-serif" font-weight="350" font-size="31" fill="#8a8a8a" opacity=".7" transform="translate(1.300,1.300)">微信</text><text x="637" y="563.500" font-family="'Liberation Sans','Noto Sans CJK SC',sans-serif" font-weight="350" font-size="31" fill="#f6f6f6">微信</text></g>
<rect x="35.500" y="31.500" width="260" height="61.500" fill="none" stroke="#d8443f" stroke-width="3"/>
<polygon points="165.700,100 166.400,100 258.600,514.800 264,514 257.800,529.800 247,517.600 250.800,516.800" fill="#7f0f86"/>
<polygon points="322.600,527.600 322,527 478,437.500 476,433.400 495,431.900 484,446.600 482.500,443" fill="#7f0f86"/>
</svg>

</div></body></html>
